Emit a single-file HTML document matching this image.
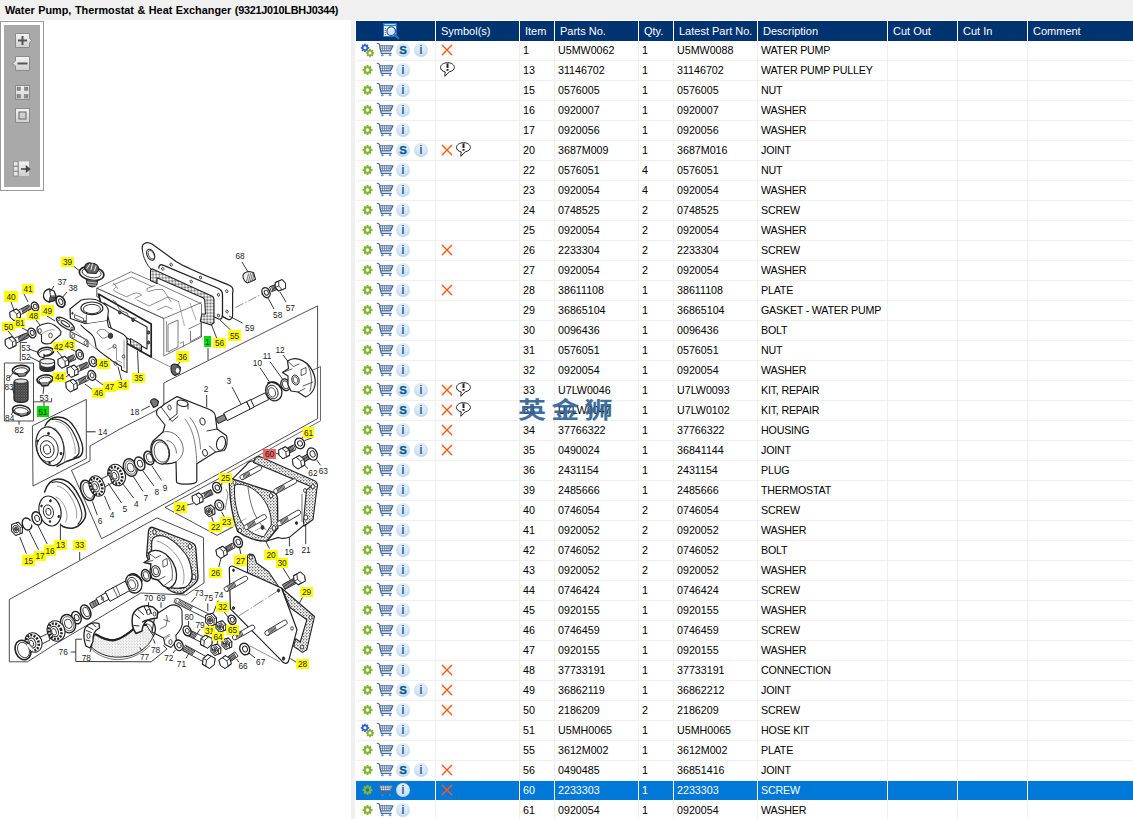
<!DOCTYPE html>
<html lang="en"><head><meta charset="utf-8"><title>Water Pump, Thermostat &amp; Heat Exchanger</title>
<style>
*{margin:0;padding:0;box-sizing:border-box}
html,body{width:1133px;height:819px;overflow:hidden;background:#f0f0f0}
body{position:relative;font-family:"Liberation Sans","Noto Sans CJK SC",sans-serif;font-size:10.7px;color:#000}
#title{position:absolute;left:5px;top:2px;height:16px;line-height:16px;font-weight:bold;font-size:10.85px;white-space:nowrap;color:#000;word-spacing:.5px}
#title span{letter-spacing:-.25px}
#left{position:absolute;left:0;top:20px;width:351px;height:799px;background:#fff;overflow:hidden}
#tb{position:absolute;left:0;top:1px;width:44px;height:170px;border:1px solid #9a9a9a;background:#fff}
#tb .in{position:absolute;left:3px;top:3px;width:36px;height:162px;background:#a9a9a9}
#grid{position:absolute;left:0;top:0;width:1133px;height:819px;pointer-events:none}
#grid:after{content:"";position:absolute;left:355px;top:20px;width:1px;height:799px;background:#fff}
#grid:before{content:"";position:absolute;left:355px;top:20px;width:778px;height:799px;background:#fff}
.hd{position:absolute;top:21px;height:20px;background:#003471;color:#fff;line-height:20px;white-space:nowrap;overflow:hidden;font-size:11px}
.hd span{position:absolute;left:5px;top:0}
.row{position:absolute;left:355px;width:778px;height:20px;border-bottom:1px solid #f0f0f0;line-height:19px;white-space:nowrap}
.row.sel{background:#0078d7;color:#fff;border-bottom-color:#fff}
.row .t{position:absolute;top:0}
.row .d{letter-spacing:-0.2px}
.ic{position:absolute;overflow:visible}
.vs{position:absolute;top:41px;width:1px;height:778px;background:#f0f0f0}
.vw{position:absolute;width:1px;height:19px;background:#fff}
.cb{position:absolute;top:2px;width:14px;height:14px;margin-left:1px;border-radius:50%;background:radial-gradient(circle at 50% 35%,#eef6fc 0%,#cfe3f3 55%,#a9cbe6 100%);text-align:center}
.cb b{position:absolute;left:0;width:14px;text-align:center;font-weight:bold;line-height:14px}
.cb .s{top:0;color:#0a5a96;font-size:11.5px;-webkit-text-stroke:0.3px #0a5a96}
.cb .i{top:0;color:#3a68a8;font-size:12px}
#wm{position:absolute;left:518px;top:393px;font-size:26px;line-height:30px;font-weight:bold;color:#2c5f93;opacity:.9;letter-spacing:4.8px;white-space:nowrap;font-family:"Noto Sans CJK SC","Liberation Sans",sans-serif;transform:scale(1.08,.88);transform-origin:0 50%}

</style></head>
<body>
<svg width="0" height="0" style="position:absolute">
<defs>
<g id="gearshape"><circle r="3" fill="none" stroke-width="2.2"/><g stroke-width="2.1"><path d="M0-5.2V-3.5M0 3.5V5.2M-5.2 0H-3.5M3.5 0H5.2M-3.7-3.7L-2.500-2.5M2.500 2.5L3.7 3.7M-3.7 3.7L-2.500 2.5M2.500-2.5L3.7-3.700"/></g></g>
<g id="i-gear"><g transform="translate(7.5,8) scale(.94)" stroke="#82b432"><use href="#gearshape"/></g></g>
<g id="i-gear2"><g transform="translate(5,5.8) scale(.8)" stroke="#2f62d8"><use href="#gearshape"/></g><g transform="translate(10,11) scale(.8)" stroke="#82b432"><use href="#gearshape"/></g></g>
<g id="i-cart" fill="none" stroke="#48699a" stroke-width="1.15" stroke-linecap="round" stroke-linejoin="round"><path d="M1.2 1.3L3 1.8L4 4.300L5.200 11.400H15.200"/><path d="M3.600 3.700H17L14.400 8.800H4.600Z" fill="#f2f6fb"/><path d="M6.400 4.300V8.300M8.600 4.300V8.300M10.800 4.300V8.300M13 4.300V8.300M15 4.300V7.300M4.300 6.200H15.800" stroke-width=".7"/><circle cx="6.300" cy="13.200" r=".8" fill="#3a8fe0" stroke="#3a8fe0" stroke-width=".6"/><circle cx="14" cy="13.200" r=".8" fill="#3a8fe0" stroke="#3a8fe0" stroke-width=".6"/></g>
<g id="i-x" stroke="#ff5a14" stroke-width="1.4" stroke-linecap="round"><path d="M3.3 4.3L12.7 13.7M12.7 4.3L3.3 13.7"/></g>
<g id="i-bub" fill="none" stroke="#222" stroke-width="1"><path d="M8.5 1.7C12.4 1.7 15.4 3.8 15.4 6.5C15.4 8.6 13.2 10.2 10.3 10.9L5.8 15.3L6.2 10.9C3.4 10.3 1.5 8.6 1.5 6.5C1.5 3.8 4.6 1.7 8.5 1.7Z" fill="#fff"/><path d="M8.5 2.4V7" stroke-width="2"/><path d="M8.5 8V9.800" stroke-width="2"/></g>
<g id="i-find"><rect x="0.5" y="1.5" width="13" height="13" fill="#fff" stroke="#1c74c8" stroke-width="1"/><rect x="0" y="1" width="14" height="3.200" fill="#1c78d2"/><path d="M1.5 2.6H12.5" stroke="#fff" stroke-width=".8"/><path d="M2.300 6V13.500" stroke="#2a6ab8" stroke-width="1.2" stroke-dasharray="1 1"/><circle cx="8.2" cy="9.3" r="4.300" fill="#dfe3e8" stroke="#1c66b6" stroke-width="1.3"/><path d="M6 7.500C7 6.300 9 6 10.300 7" stroke="#fff" stroke-width="1.200" fill="none"/><path d="M11.300 12.500L15.300 16.300" stroke="#2a6cba" stroke-width="2.200" stroke-linecap="round"/></g>
</defs>
</svg>

<div id="title">Water Pump, Thermostat &amp; Heat Exchanger <span>(9321J010LBHJ0344)</span></div>
<div id="left">
<div id="tb"><div class="in"></div>
<svg style="position:absolute;left:-1px;top:-1px" width="44" height="170" viewBox="0 21 44 170">
<defs><linearGradient id="bg1" x1="0" y1="0" x2="0" y2="1"><stop offset="0" stop-color="#f4f4f4"/><stop offset="1" stop-color="#cfcfcf"/></linearGradient></defs>
<g stroke="#8a8a8a" stroke-width="1" fill="url(#bg1)">
<path d="M15.5 33.500H29.500V38L31.500 40.500L29.500 43V47.500H15.500Z"/>
<path d="M15.500 56.500H29.500V70.500H15.500V66L12.500 63.500L15.500 61Z"/>
<rect x="15.500" y="85.500" width="14" height="14"/>
<rect x="15.500" y="108.500" width="14" height="14"/>
</g>
<path d="M22.500 36V45M18 40.500H27" stroke="#555" stroke-width="2" fill="none"/>
<path d="M17.500 63.500H27.500" stroke="#555" stroke-width="2" fill="none"/>
<g fill="#8a8a8a" stroke="#777" stroke-width=".5"><rect x="17" y="87" width="3.500" height="3.500"/><rect x="24.500" y="87" width="3.500" height="3.500"/><rect x="17" y="94.500" width="3.500" height="3.500"/><rect x="24.500" y="94.500" width="3.500" height="3.500"/></g>
<rect x="19" y="112" width="7" height="7" fill="#d0d0d0" stroke="#666" stroke-width="1"/>
<g fill="#e6e6e6" stroke="#8a8a8a" stroke-width=".8"><rect x="13.500" y="161.500" width="4.500" height="4.500"/><rect x="13.500" y="166.500" width="4.500" height="4.500"/><rect x="13.500" y="171.500" width="4.500" height="4.500"/></g>
<rect x="19" y="161.500" width="10" height="14.500" fill="url(#bg1)"/>
<path d="M21 169H28M26.500 166.500L29.500 169L26.500 171.500Z" stroke="#444" stroke-width="1.400" fill="#444"/>
</svg></div>

</div>
<svg id="dg" width="351" height="819" viewBox="0 0 351 819" style="position:absolute;left:0;top:0">
<defs><pattern id="dots" width="3" height="3" patternUnits="userSpaceOnUse"><rect width="3" height="3" fill="#fff"/><circle cx="0.8" cy="0.8" r="0.68" fill="#2a2a2a"/><circle cx="2.3" cy="2.2" r="0.55" fill="#444"/></pattern>
<pattern id="dk" width="3.2" height="3.2" patternUnits="userSpaceOnUse"><rect width="3.2" height="3.2" fill="#b4b4b4"/><circle cx="1" cy="1" r="0.95" fill="#fff"/><circle cx="2.5" cy="2.5" r="0.5" fill="#333"/></pattern>
<pattern id="rub" width="2.6" height="2.6" patternUnits="userSpaceOnUse"><rect width="2.6" height="2.6" fill="#3a3a3a"/><circle cx="0.8" cy="0.8" r="0.6" fill="#bbb"/><circle cx="2" cy="2.1" r="0.4" fill="#888"/></pattern>
<pattern id="hose" width="2.8" height="2.8" patternUnits="userSpaceOnUse"><rect width="2.8" height="2.8" fill="#fff"/><circle cx="0.7" cy="0.7" r="0.45" fill="#444"/><circle cx="2.1" cy="2" r="0.4" fill="#555"/></pattern></defs>
<style>.n{font-family:"Liberation Sans",sans-serif;text-anchor:middle;fill:#222}</style>
<path d="M208 348 L208 360" stroke="#222" stroke-width="0.9" fill="none"/>
<path d="M163.8 405 L163.8 383 L230 349.6 L299 315 L317.6 305.9 L317.6 418.6 L220 473 L110 534.3 L101.6 538.7 L73.6 475 L71.4 470.3 L90 461 L90 446 L120 429 L162.7 407" stroke="#222" stroke-width="0.8" fill="none"/>
<path d="M312.9 370 L320.5 366.6 L320.5 420.8 L222 476" stroke="#444" stroke-width="0.8" fill="none"/>
<path d="M32.4 425.8 L86.3 399.4 L86.3 458.5 L33 486Z" stroke="#222" stroke-width="0.8" fill="none" stroke-linejoin="round"/>
<path d="M86.3 431.8 L95.6 431.8" stroke="#222" stroke-width="1" fill="none"/>
<path d="M4.4 363 L33.5 363 L33.5 421 L4.4 421Z" stroke="#222" stroke-width="0.8" fill="none" stroke-linejoin="round"/>
<path d="M19 421 L19 424.7" stroke="#222" stroke-width="0.9" fill="none"/>
<path d="M27 342.5 L20.3 342.5 L20.3 361" stroke="#222" stroke-width="0.8" fill="none"/>
<path d="M33 401.8 L51.6 401.8 L51.6 398" stroke="#222" stroke-width="0.8" fill="none"/>
<path d="M44 402 L44 406" stroke="#222" stroke-width="0.9" fill="none"/>
<path d="M79.7 552 L79.7 560" stroke="#222" stroke-width="0.9" fill="none"/>
<path d="M9.3 599.5 L90 555 L110 543.7 L157 517.9 L203.4 537.6 L204 583 L185.8 595 L140.8 593 L53.8 645 L27.5 661.8 L9.3 661.8Z" stroke="#222" stroke-width="0.8" fill="none" stroke-linejoin="round"/>
<path d="M220 478 L165 507.4 L217 535.4 L233 527" stroke="#222" stroke-width="0.8" fill="none"/>
<path d="M81.9 639.2 L75.8 639.2 L75.8 661.5 L151.2 661.8 L167 649 L163.3 645.3" stroke="#222" stroke-width="0.9" fill="none"/>
<path d="M70.9 652 L75.8 652" stroke="#222" stroke-width="0.9" fill="none"/>
<path d="M142.4 250 C141 243 147 241 152 244 L176 261.4 C190 270 215 279 229.8 285.5 C233 287 233.5 290 232.6 293 L232.6 316 C232.6 319.5 229 320.5 226 318.5 L222 316" stroke="#222" stroke-width="1.2" fill="none" stroke-linejoin="round" stroke-linecap="round"/>
<path d="M142.4 250 C143 258 147 265 151 269" stroke="#222" stroke-width="1.0" fill="none" stroke-linejoin="round" stroke-linecap="round"/>
<ellipse cx="150.7" cy="254.8" rx="3.6" ry="5.8" stroke="#222" stroke-width="1.1" fill="none" transform="rotate(-25 150.7 254.8)"/>
<ellipse cx="151.3" cy="254.8" rx="2.6" ry="4.6" stroke="#222" stroke-width="0.7" fill="none" transform="rotate(-25 151.3 254.8)"/>
<ellipse cx="171.2" cy="264.6" rx="1.1" ry="1.5" stroke="#222" stroke-width="0.8" fill="none" transform="rotate(-20 171.2 264.6)"/>
<ellipse cx="200.5" cy="277.5" rx="1.1" ry="1.5" stroke="#222" stroke-width="0.8" fill="none" transform="rotate(-20 200.5 277.5)"/>
<ellipse cx="226.8" cy="291.2" rx="1.1" ry="1.5" stroke="#222" stroke-width="0.8" fill="none" transform="rotate(-20 226.8 291.2)"/>
<ellipse cx="227" cy="311.5" rx="1.1" ry="1.5" stroke="#222" stroke-width="0.8" fill="none" transform="rotate(-20 227 311.5)"/>
<path d="M159 268 C158.500 265.5 160.500 264 163 265.2 L218.5 288.500 C221.500 290 222.500 292 222.500 295 L222.500 315.500 C222.500 319 220 320 217.500 318.500 L214.5 317" stroke="#222" stroke-width="1.3" fill="none" stroke-linejoin="round" stroke-linecap="round"/>
<ellipse cx="162.8" cy="268.8" rx="1.1" ry="1.5" stroke="#222" stroke-width="0.8" fill="none" transform="rotate(-20 162.8 268.8)"/>
<ellipse cx="191.2" cy="281.5" rx="1.1" ry="1.5" stroke="#222" stroke-width="0.8" fill="none" transform="rotate(-20 191.2 281.5)"/>
<ellipse cx="218.5" cy="294.8" rx="1.1" ry="1.5" stroke="#222" stroke-width="0.8" fill="none" transform="rotate(-20 218.5 294.8)"/>
<ellipse cx="218.5" cy="315.5" rx="1.1" ry="1.5" stroke="#222" stroke-width="0.8" fill="none" transform="rotate(-20 218.5 315.5)"/>
<path d="M96.8 288.2 L131 271.8 L151 280.5 L157.5 283.5 L198.5 302.5 L201.5 304 L201.5 337 L163.8 356 L163.8 318.5Z" stroke="#555" stroke-width="0.8" fill="#fff" stroke-linejoin="round"/>
<path d="M96.8 288.2 L163.8 318.5 L201.5 302.5" stroke="#555" stroke-width="0.8" fill="none"/>
<path d="M96.8 288.2 L96.8 296.5 L151.2 326" stroke="#222" stroke-width="0.8" fill="none"/>
<path d="M113 285 L131.5 277 L152 286.5 M115.500 287.5 C113 289 113.500 291 116 292 L126.5 296.8 L133.5 293.500 C136 292.500 140 293 141.500 295 L135 298.5 M147 288.500 L154.5 285.5 M147.500 289 C146 290 147 291.500 149 291.500 L155.500 289.5 L163 289.500 L171 301.5 M113.500 283 L117.5 288.5" stroke="#444" stroke-width="0.6" fill="none" stroke-linejoin="round" stroke-linecap="round"/>
<path d="M137 300 L149 306 L168 297 L178.500 301.5 M157.500 310 L166 306 L172 309" stroke="#444" stroke-width="0.6" fill="none" stroke-linejoin="round" stroke-linecap="round"/>
<path d="M166.5 321 L166.5 352" stroke="#555" stroke-width="0.6" fill="none"/>
<path d="M168 324.5 L178 320 L178 347 L168 352Z" stroke="#444" stroke-width="0.7" fill="none" stroke-linejoin="round"/>
<path d="M188.5 329 L201 323 L201 336 L190.5 341.5 L190.5 331" stroke="#444" stroke-width="0.7" fill="none" stroke-linejoin="round"/>
<path d="M180 343.5 L183.5 341.5 L183.5 347" stroke="#555" stroke-width="0.6" fill="none"/>
<path d="M178.5 301.5 L184.5 326" stroke="#555" stroke-width="0.5" fill="none"/>
<path d="M190 303 L196 320" stroke="#555" stroke-width="0.5" fill="none"/>
<path d="M150.5 270 L152 268.8 L212.8 296.5 L214 299 L214 322.5 L211 325 L200.3 321.4 L201.8 314 L205.5 314 L204.7 300 L203.5 298 L157 277.8 L157 283.5 L150.5 280.5Z" stroke="#222" stroke-width="1.1" fill="url(#dk)" stroke-linejoin="round"/>
<path d="M98.5 294 L151.2 324 L151.2 357 L108 333Z" stroke="#222" stroke-width="1.7" fill="#fff" stroke-linejoin="round"/>
<path d="M104 303 L147 327 L147 349 L111.5 329.5Z" stroke="#222" stroke-width="1.1" fill="#fff" stroke-linejoin="round"/>
<ellipse cx="119.8" cy="312.5" rx="1.2" ry="1.6" stroke="#222" stroke-width="0.9" fill="#555"/>
<ellipse cx="133" cy="320" rx="1.2" ry="1.6" stroke="#222" stroke-width="0.9" fill="#555"/>
<ellipse cx="148.5" cy="332.5" rx="1.2" ry="1.6" stroke="#222" stroke-width="0.9" fill="#555"/>
<ellipse cx="148.5" cy="342.5" rx="1.2" ry="1.6" stroke="#222" stroke-width="0.9" fill="#555"/>
<ellipse cx="140.5" cy="350" rx="1.2" ry="1.6" stroke="#222" stroke-width="0.9" fill="#555"/>
<ellipse cx="126" cy="341.5" rx="1.2" ry="1.6" stroke="#222" stroke-width="0.9" fill="#555"/>
<path d="M113 300 C118 302 117 309 122 311 L127 313 C128 317 132 319 136 318" stroke="#333" stroke-width="0.8" fill="none" stroke-linejoin="round" stroke-linecap="round"/>
<path d="M130.5 338.5 L141.5 345 L141.5 351 L130.5 344.5Z" stroke="#222" stroke-width="1" fill="url(#dk)" stroke-linejoin="round"/>
<path d="M69.900 309 L80.9 300.300 C84 299 95 298 98.500 300.9 C104 303 108 306 108.400 310.8 L107.3 320.7 L86.4 324 L70.4 318.500Z" stroke="#222" stroke-width="1.1" fill="#fff" stroke-linejoin="round" stroke-linecap="round"/>
<ellipse cx="91.9" cy="308.3" rx="11" ry="6.3" stroke="#222" stroke-width="1.1" fill="#fff"/>
<ellipse cx="91.9" cy="309" rx="8.6" ry="4.6" stroke="#222" stroke-width="0.9" fill="#fff"/>
<path d="M86.400 324 L86.4 315.5 M70.400 318.500 L70.400 309.5" stroke="#222" stroke-width="0.7" fill="none" stroke-linejoin="round" stroke-linecap="round"/>
<path d="M74.5 314.5 L83.5 318.5 L83.5 322 L74.5 318Z" stroke="#333" stroke-width="0.8" fill="none" stroke-linejoin="round"/>
<ellipse cx="72.5" cy="313.3" rx="0.7" ry="0.9" stroke="#222" stroke-width="0.8" fill="#333"/>
<ellipse cx="85" cy="321.5" rx="0.7" ry="0.9" stroke="#222" stroke-width="0.8" fill="#333"/>
<path d="M80.900 325 C86 331 90 332 93 336 C96 340 95 345 96.300 348 C100 353 108 357 112.700 361.3 L121.500 366.5 L121.5 370 L127 372.5 L127 340 C127 336 124 334.5 121 333 L108.500 327 L107.3 320.7" stroke="#222" stroke-width="1.1" fill="#fff" stroke-linejoin="round" stroke-linecap="round"/>
<path d="M97 332 C99 329 103 328.500 106 330.500 L110 334.500 C108 337 104 339 102 338 Z" stroke="#444" stroke-width="0.7" fill="none" stroke-linejoin="round" stroke-linecap="round"/>
<ellipse cx="110.5" cy="335.8" rx="2.2" ry="2.6" stroke="#222" stroke-width="0.9" fill="#444"/>
<path d="M108 349.500 L113.500 346.5 L116.500 348 L116.500 360 L121.500 362.5 M124 340 L124 368" stroke="#555" stroke-width="0.6" fill="none" stroke-linejoin="round" stroke-linecap="round"/>
<ellipse cx="114.5" cy="346.3" rx="1.5" ry="1.9" stroke="#222" stroke-width="0.7" fill="none"/>
<ellipse cx="115.5" cy="363.5" rx="1.5" ry="1.9" stroke="#222" stroke-width="0.7" fill="none"/>
<ellipse cx="123.5" cy="356.5" rx="1.3" ry="1.7" stroke="#222" stroke-width="0.7" fill="none"/>
<path d="M70.5 331.5 L88 340.5 L88 347 L70.500 337.5Z" stroke="#222" stroke-width="0.9" fill="#fff" stroke-linejoin="round" stroke-linecap="round"/>
<ellipse cx="73.2" cy="336" rx="1.5" ry="2" stroke="#222" stroke-width="0.7" fill="none"/>
<ellipse cx="85.5" cy="342.8" rx="1.5" ry="2" stroke="#222" stroke-width="0.7" fill="none"/>
<path d="M69 325.5 L96 349" stroke="#555" stroke-width="0.5" fill="none"/>
<ellipse cx="91.6" cy="273.4" rx="12.4" ry="6.8" stroke="#222" stroke-width="1.6" fill="#fff" transform="rotate(10 91.6 273.4)"/>
<ellipse cx="91.6" cy="272.8" rx="9.6" ry="4.8" stroke="#222" stroke-width="0.8" fill="none" transform="rotate(10 91.6 272.8)"/>
<path d="M84.700 269 C84 264 88 262.500 91 263 C95 263 99 265 98.600 270 L96 273.500 L88 273Z" stroke="#222" stroke-width="1.2" fill="#666" stroke-linejoin="round" stroke-linecap="round"/>
<path d="M87 268.500 L89.500 264.500 M91 269.500 L92.500 264 M94.500 270.500 L96 266" stroke="#eee" stroke-width="1.0" fill="none" stroke-linejoin="round" stroke-linecap="round"/>
<path d="M86.500 279.500 C86.500 284.500 88 286.500 92 287 C96 287 97.500 284.500 97.500 280.500" stroke="#222" stroke-width="1.1" fill="#555" stroke-linejoin="round" stroke-linecap="round"/>
<path d="M87 282 L97 283" stroke="#ddd" stroke-width="0.8" fill="none"/>
<path d="M87.5 284.5 L96.5 285.3" stroke="#ddd" stroke-width="0.8" fill="none"/>
<path d="M43.500 296.500 C43 292 46 289.500 49.500 289 L54 291 L56 296 L54.500 300.500 L49 302 C45.500 301 44 299 43.500 296.500Z" stroke="#222" stroke-width="1.3" fill="#fff" stroke-linejoin="round" stroke-linecap="round"/>
<path d="M49 302 L50.500 296 L49.500 289 M50.500 296 L56 296" stroke="#222" stroke-width="0.9" fill="none" stroke-linejoin="round" stroke-linecap="round"/>
<path d="M50.500 297 L55 297 L54 300.5 L50 301.5Z" stroke="#222" stroke-width="0.6" fill="#555" stroke-linejoin="round" stroke-linecap="round"/>
<ellipse cx="60.5" cy="301.6" rx="4.2" ry="5.8" stroke="#222" stroke-width="1.7" fill="#fff" transform="rotate(-25 60.5 301.6)"/>
<ellipse cx="60.8" cy="301.6" rx="1.9" ry="3" stroke="#222" stroke-width="0.9" fill="none" transform="rotate(-25 60.8 301.6)"/>
<path d="M16.6 316.7 L31.1 309.2 L28.9 304.8 L14.4 312.3Z" stroke="#222" stroke-width="0.9" fill="#fff" stroke-linejoin="round"/>
<path d="M23.2 313.3 L21.5 308.6" stroke="#1a1a1a" stroke-width="0.85" fill="none"/>
<path d="M24.2 312.8 L22.6 308" stroke="#1a1a1a" stroke-width="0.85" fill="none"/>
<path d="M25.3 312.2 L23.6 307.5" stroke="#1a1a1a" stroke-width="0.85" fill="none"/>
<path d="M26.4 311.7 L24.7 306.9" stroke="#1a1a1a" stroke-width="0.85" fill="none"/>
<path d="M27.4 311.1 L25.8 306.4" stroke="#1a1a1a" stroke-width="0.85" fill="none"/>
<path d="M28.5 310.6 L26.8 305.8" stroke="#1a1a1a" stroke-width="0.85" fill="none"/>
<path d="M29.6 310 L27.9 305.3" stroke="#1a1a1a" stroke-width="0.85" fill="none"/>
<path d="M9.8 312.3 L13 310.6 L16.3 308.9 L20.1 312.1 L20.6 317.1 L14 320.5 L10.3 317.2Z" stroke="#222" stroke-width="1.1" fill="#fff" stroke-linejoin="round"/>
<path d="M16.7 313.9 L17.2 318.8 L14 320.5 L10.3 317.2 L9.8 312.3 L13 310.6Z" stroke="#222" stroke-width="0.9" fill="#fff" stroke-linejoin="round"/>
<path d="M16.7 313.9 L20.1 312.1" stroke="#222" stroke-width="0.8" fill="none"/>
<path d="M17.2 318.8 L20.6 317.1" stroke="#222" stroke-width="0.8" fill="none"/>
<path d="M13 310.6 L16.3 308.9" stroke="#222" stroke-width="0.8" fill="none"/>
<ellipse cx="35" cy="306.5" rx="3.5" ry="4.6" stroke="#222" stroke-width="1.4" fill="#fff" transform="rotate(-25 35 306.5)"/>
<ellipse cx="35.3" cy="306.5" rx="1.8" ry="2.3" stroke="#222" stroke-width="0.9" fill="none" transform="rotate(-25 35.3 306.5)"/>
<ellipse cx="65.4" cy="323.8" rx="10.5" ry="3.9" stroke="#222" stroke-width="1.2" fill="#fff" transform="rotate(33 65.4 323.8)"/>
<ellipse cx="65.4" cy="323.8" rx="5" ry="1.7" stroke="#222" stroke-width="1.0" fill="none" transform="rotate(33 65.4 323.8)"/>
<ellipse cx="58.8" cy="319.5" rx="1.1" ry="1.3" stroke="#222" stroke-width="0.8" fill="none"/>
<ellipse cx="72" cy="328.3" rx="1.1" ry="1.3" stroke="#222" stroke-width="0.8" fill="none"/>
<path d="M37 330 C36.500 327 39 325.500 42 324.500 L48 323 C52 323 58 327 61 331.5 L60.5 334.800 L53.500 340.500 L50.5 343.5 C46 344.500 42 343.500 41.500 341.500 L41.500 334.500 C39 334 37.500 332.5 37 330Z" stroke="#222" stroke-width="1.1" fill="#fff" stroke-linejoin="round" stroke-linecap="round"/>
<ellipse cx="39.8" cy="330.8" rx="1.6" ry="2.2" stroke="#222" stroke-width="0.8" fill="none"/>
<ellipse cx="50.5" cy="335.5" rx="1.8" ry="2.3" stroke="#222" stroke-width="0.8" fill="none"/>
<path d="M42 334 C46 331 50 329 54 330" stroke="#555" stroke-width="0.6" fill="none" stroke-linejoin="round" stroke-linecap="round"/>
<path d="M12 344.9 L28.5 337.7 L26.5 332.9 L10 340.1Z" stroke="#222" stroke-width="0.9" fill="#fff" stroke-linejoin="round"/>
<path d="M19.5 341.6 L18 336.6" stroke="#1a1a1a" stroke-width="0.85" fill="none"/>
<path d="M20.6 341.2 L19.1 336.1" stroke="#1a1a1a" stroke-width="0.85" fill="none"/>
<path d="M21.7 340.7 L20.2 335.6" stroke="#1a1a1a" stroke-width="0.85" fill="none"/>
<path d="M22.8 340.2 L21.3 335.2" stroke="#1a1a1a" stroke-width="0.85" fill="none"/>
<path d="M23.9 339.7 L22.4 334.7" stroke="#1a1a1a" stroke-width="0.85" fill="none"/>
<path d="M25 339.2 L23.5 334.2" stroke="#1a1a1a" stroke-width="0.85" fill="none"/>
<path d="M26.1 338.8 L24.6 333.7" stroke="#1a1a1a" stroke-width="0.85" fill="none"/>
<path d="M27.2 338.3 L25.7 333.2" stroke="#1a1a1a" stroke-width="0.85" fill="none"/>
<path d="M5.2 339.7 L8.6 338.1 L12.2 336.6 L15.9 340.3 L16.1 345.6 L12.7 347.2 L9.1 348.7 L5.4 345Z" stroke="#222" stroke-width="1.1" fill="#fff" stroke-linejoin="round"/>
<path d="M12.5 341.9 L12.7 347.2 L9.1 348.7 L5.4 345 L5.2 339.7 L8.7 338.1Z" stroke="#222" stroke-width="0.9" fill="#fff" stroke-linejoin="round"/>
<path d="M12.5 341.9 L15.9 340.3" stroke="#222" stroke-width="0.8" fill="none"/>
<path d="M12.7 347.2 L16.1 345.6" stroke="#222" stroke-width="0.8" fill="none"/>
<path d="M8.7 338.1 L12.2 336.6" stroke="#222" stroke-width="0.8" fill="none"/>
<ellipse cx="31.9" cy="333" rx="3.8" ry="5" stroke="#222" stroke-width="1.4" fill="#fff" transform="rotate(-25 31.9 333)"/>
<ellipse cx="32.2" cy="333" rx="1.9" ry="2.5" stroke="#222" stroke-width="0.9" fill="none" transform="rotate(-25 32.2 333)"/>
<ellipse cx="45.6" cy="351.8" rx="8" ry="4.3" stroke="#222" stroke-width="1.6" fill="#fff" transform="rotate(-8 45.6 351.8)"/>
<ellipse cx="45.6" cy="352.5" rx="6.2" ry="2.8" stroke="#222" stroke-width="0.9" fill="none" transform="rotate(-8 45.6 352.5)"/>
<path d="M38 353 L39.500 356.500 L44 358 L44 354" stroke="#222" stroke-width="1.1" fill="#fff" stroke-linejoin="round" stroke-linecap="round"/>
<path d="M40 361.500 C40 358 54.500 358 54.500 361.500 L54.500 368 C54.500 372.500 40 372.500 40 368Z" stroke="#222" stroke-width="1.3" fill="#fff" stroke-linejoin="round" stroke-linecap="round"/>
<path d="M40.500 365 C44 368 51 368 54 365 L54.200 368 C54 372 40.500 372 40.500 368Z" stroke="#222" stroke-width="0.5" fill="#333" stroke-linejoin="round" stroke-linecap="round"/>
<ellipse cx="47.2" cy="361.3" rx="7.2" ry="2.6" stroke="#222" stroke-width="0.9" fill="#eee"/>
<ellipse cx="45" cy="379.5" rx="8" ry="4.5" stroke="#222" stroke-width="1.6" fill="#fff" transform="rotate(-8 45 379.5)"/>
<ellipse cx="45" cy="380.2" rx="6.2" ry="3" stroke="#222" stroke-width="0.9" fill="none" transform="rotate(-8 45 380.2)"/>
<path d="M39.500 382 L42 386 L48 385.500 L50 382" stroke="#222" stroke-width="1.3" fill="#888" stroke-linejoin="round" stroke-linecap="round"/>
<ellipse cx="20.9" cy="370" rx="8.6" ry="4.6" stroke="#222" stroke-width="1.6" fill="#fff" transform="rotate(-5 20.9 370)"/>
<ellipse cx="20.9" cy="370.8" rx="6.6" ry="3" stroke="#222" stroke-width="0.9" fill="none" transform="rotate(-5 20.9 370.8)"/>
<path d="M17 373.500 L19 376.500 L25 376 L27 373" stroke="#222" stroke-width="1.2" fill="#888" stroke-linejoin="round" stroke-linecap="round"/>
<path d="M14 382.500 C14 378.500 28 378.500 28 382.500 L28 399 C28 403.500 14 403.500 14 399Z" stroke="#222" stroke-width="1.3" fill="url(#rub)" stroke-linejoin="round" stroke-linecap="round"/>
<ellipse cx="21" cy="381.2" rx="6.6" ry="2.2" stroke="#222" stroke-width="0.8" fill="#ddd"/>
<ellipse cx="21.4" cy="410.4" rx="9" ry="5" stroke="#222" stroke-width="1.6" fill="#fff" transform="rotate(8 21.4 410.4)"/>
<ellipse cx="21.4" cy="411" rx="7" ry="3.3" stroke="#222" stroke-width="0.9" fill="none" transform="rotate(8 21.4 411)"/>
<path d="M18 414 L21 416.500 L27 415 L28 412" stroke="#222" stroke-width="1.2" fill="#888" stroke-linejoin="round" stroke-linecap="round"/>
<path d="M64.8 364.4 L75.8 359.4 L73.6 354.6 L62.6 359.6Z" stroke="#222" stroke-width="0.9" fill="#fff" stroke-linejoin="round"/>
<path d="M69.7 362.1 L68.2 357.1" stroke="#1a1a1a" stroke-width="0.85" fill="none"/>
<path d="M70.8 361.6 L69.3 356.6" stroke="#1a1a1a" stroke-width="0.85" fill="none"/>
<path d="M71.9 361.1 L70.4 356.1" stroke="#1a1a1a" stroke-width="0.85" fill="none"/>
<path d="M73 360.6 L71.5 355.6" stroke="#1a1a1a" stroke-width="0.85" fill="none"/>
<path d="M74.1 360.1 L72.6 355.1" stroke="#1a1a1a" stroke-width="0.85" fill="none"/>
<path d="M58 359.4 L61.4 357.8 L64.8 356.3 L68.5 359.8 L68.8 364.9 L65.4 366.5 L61.9 368.1 L58.2 364.5Z" stroke="#222" stroke-width="1.1" fill="#fff" stroke-linejoin="round"/>
<path d="M65 361.4 L65.3 366.5 L61.9 368.1 L58.2 364.5 L58 359.4 L61.4 357.8Z" stroke="#222" stroke-width="0.9" fill="#fff" stroke-linejoin="round"/>
<path d="M65 361.4 L68.5 359.8" stroke="#222" stroke-width="0.8" fill="none"/>
<path d="M65.3 366.5 L68.8 364.9" stroke="#222" stroke-width="0.8" fill="none"/>
<path d="M61.4 357.8 L64.8 356.3" stroke="#222" stroke-width="0.8" fill="none"/>
<ellipse cx="79.7" cy="354.6" rx="3.5" ry="5" stroke="#222" stroke-width="1.4" fill="#fff" transform="rotate(-20 79.7 354.6)"/>
<ellipse cx="80" cy="354.6" rx="1.8" ry="2.5" stroke="#222" stroke-width="0.9" fill="none" transform="rotate(-20 80 354.6)"/>
<path d="M74 373.4 L89 366.9 L87 362.1 L72 368.6Z" stroke="#222" stroke-width="0.9" fill="#fff" stroke-linejoin="round"/>
<path d="M80.8 370.5 L79.4 365.4" stroke="#1a1a1a" stroke-width="0.85" fill="none"/>
<path d="M81.9 370 L80.5 364.9" stroke="#1a1a1a" stroke-width="0.85" fill="none"/>
<path d="M83 369.5 L81.6 364.5" stroke="#1a1a1a" stroke-width="0.85" fill="none"/>
<path d="M84.1 369 L82.7 364" stroke="#1a1a1a" stroke-width="0.85" fill="none"/>
<path d="M85.2 368.6 L83.8 363.5" stroke="#1a1a1a" stroke-width="0.85" fill="none"/>
<path d="M86.3 368.1 L84.9 363" stroke="#1a1a1a" stroke-width="0.85" fill="none"/>
<path d="M87.4 367.6 L86 362.5" stroke="#1a1a1a" stroke-width="0.85" fill="none"/>
<path d="M67.2 368.1 L74.2 365.1 L78 368.9 L78.1 374.2 L71.1 377.2 L67.4 373.4Z" stroke="#222" stroke-width="1.1" fill="#fff" stroke-linejoin="round"/>
<path d="M74.5 370.4 L74.6 375.7 L71.1 377.2 L67.4 373.4 L67.2 368.1 L70.7 366.6Z" stroke="#222" stroke-width="0.9" fill="#fff" stroke-linejoin="round"/>
<path d="M74.5 370.4 L78 368.9" stroke="#222" stroke-width="0.8" fill="none"/>
<path d="M74.6 375.7 L78.1 374.2" stroke="#222" stroke-width="0.8" fill="none"/>
<path d="M70.7 366.6 L74.2 365.1" stroke="#222" stroke-width="0.8" fill="none"/>
<ellipse cx="92.9" cy="361.7" rx="3.8" ry="5" stroke="#222" stroke-width="1.4" fill="#fff" transform="rotate(-20 92.9 361.7)"/>
<ellipse cx="93.2" cy="361.7" rx="1.9" ry="2.5" stroke="#222" stroke-width="0.9" fill="none" transform="rotate(-20 93.2 361.7)"/>
<path d="M73.1 387.6 L88.5 380.3 L86.3 375.7 L70.9 383Z" stroke="#222" stroke-width="0.9" fill="#fff" stroke-linejoin="round"/>
<path d="M80 384.4 L78.4 379.4" stroke="#1a1a1a" stroke-width="0.85" fill="none"/>
<path d="M81.1 383.9 L79.5 378.9" stroke="#1a1a1a" stroke-width="0.85" fill="none"/>
<path d="M82.2 383.3 L80.6 378.3" stroke="#1a1a1a" stroke-width="0.85" fill="none"/>
<path d="M83.3 382.8 L81.7 377.8" stroke="#1a1a1a" stroke-width="0.85" fill="none"/>
<path d="M84.4 382.3 L82.8 377.3" stroke="#1a1a1a" stroke-width="0.85" fill="none"/>
<path d="M85.5 381.8 L83.9 376.8" stroke="#1a1a1a" stroke-width="0.85" fill="none"/>
<path d="M86.5 381.3 L85 376.3" stroke="#1a1a1a" stroke-width="0.85" fill="none"/>
<path d="M65.9 382.5 L73 379.2 L77 382.9 L77.4 388.4 L70.3 391.8 L66.3 388Z" stroke="#222" stroke-width="1.1" fill="#fff" stroke-linejoin="round"/>
<path d="M73.6 384.6 L73.9 390 L70.3 391.8 L66.3 388 L65.9 382.5 L69.6 380.8Z" stroke="#222" stroke-width="0.9" fill="#fff" stroke-linejoin="round"/>
<path d="M73.6 384.6 L77 382.9" stroke="#222" stroke-width="0.8" fill="none"/>
<path d="M73.9 390 L77.4 388.4" stroke="#222" stroke-width="0.8" fill="none"/>
<path d="M69.6 380.8 L73 379.2" stroke="#222" stroke-width="0.8" fill="none"/>
<ellipse cx="91.8" cy="375.4" rx="3.8" ry="5" stroke="#222" stroke-width="1.4" fill="#fff" transform="rotate(-20 91.8 375.4)"/>
<ellipse cx="92.1" cy="375.4" rx="1.9" ry="2.5" stroke="#222" stroke-width="0.9" fill="none" transform="rotate(-20 92.1 375.4)"/>
<path d="M171 368 C170.500 364.500 174 363.500 177 364.5 L180.5 367.5 L179.5 373.500 L175 375.500 C172 374.500 171 371.500 171 368Z" stroke="#222" stroke-width="1.2" fill="#666" stroke-linejoin="round" stroke-linecap="round"/>
<ellipse cx="177.5" cy="370.5" rx="2.4" ry="3" stroke="#222" stroke-width="0.8" fill="#fff"/>
<path d="M151 357.3 L170.4 367" stroke="#444" stroke-width="0.6" fill="none"/>
<path d="M243 276.500 C242.500 273 246 272 249 271.500 L253.500 272.5 L255.5 279.500 L247.5 283 C244.500 282 243.500 279.500 243 276.500Z" stroke="#222" stroke-width="1.1" fill="#eee" stroke-linejoin="round" stroke-linecap="round"/>
<path d="M246.500 281.500 L248.500 274 M248.500 281.500 L250.500 273.500 M250.500 281 L252.500 273.500 M252.500 280 L254 274.500" stroke="#444" stroke-width="0.7" fill="none" stroke-linejoin="round" stroke-linecap="round"/>
<path d="M279 283.1 L269.5 286.9 L271.5 291.7 L281 287.9Z" stroke="#222" stroke-width="0.9" fill="#fff" stroke-linejoin="round"/>
<path d="M277.1 283.8 L278.4 288.9" stroke="#1a1a1a" stroke-width="0.85" fill="none"/>
<path d="M276 284.3 L277.3 289.4" stroke="#1a1a1a" stroke-width="0.85" fill="none"/>
<path d="M274.9 284.7 L276.2 289.8" stroke="#1a1a1a" stroke-width="0.85" fill="none"/>
<path d="M273.8 285.2 L275.1 290.3" stroke="#1a1a1a" stroke-width="0.85" fill="none"/>
<path d="M272.7 285.6 L274 290.7" stroke="#1a1a1a" stroke-width="0.85" fill="none"/>
<path d="M271.6 286.1 L272.8 291.2" stroke="#1a1a1a" stroke-width="0.85" fill="none"/>
<path d="M275.2 282.5 L278.6 281.1 L282.1 279.7 L285.5 283.3 L285.5 288.2 L282 289.7 L278.6 291 L275.2 287.4Z" stroke="#222" stroke-width="1.1" fill="#fff" stroke-linejoin="round"/>
<path d="M278.8 286 L278.7 281.1 L282.1 279.7 L285.5 283.3 L285.5 288.2 L282.1 289.6Z" stroke="#222" stroke-width="0.9" fill="#fff" stroke-linejoin="round"/>
<path d="M278.8 286 L275.2 287.4" stroke="#222" stroke-width="0.8" fill="none"/>
<path d="M278.7 281.1 L275.2 282.5" stroke="#222" stroke-width="0.8" fill="none"/>
<path d="M282.1 289.6 L278.6 291" stroke="#222" stroke-width="0.8" fill="none"/>
<ellipse cx="266" cy="292.7" rx="3.8" ry="5.2" stroke="#222" stroke-width="1.4" fill="#fff" transform="rotate(-25 266 292.7)"/>
<ellipse cx="266.3" cy="292.7" rx="1.9" ry="2.6" stroke="#222" stroke-width="0.9" fill="none" transform="rotate(-25 266.3 292.7)"/>
<path d="M235.4 307.5 L262 294" stroke="#444" stroke-width="0.6" fill="none" stroke-dasharray="9 2 1.5 2"/>
<path d="M222 316 L229 320" stroke="#222" stroke-width="0.9" fill="none"/>
<path d="M45 426 C48 420 53 417 58 417 C65 417 71 421 75.500 429 C80 437 84 446 82.500 452 C81.500 456 79 457.500 76.200 458 L66.400 461.500 L57 466.400" stroke="#222" stroke-width="1.4" fill="#fff" stroke-linejoin="round" stroke-linecap="round"/>
<path d="M52 419.500 C60 418 68 423 72.500 431 C77 439 80 447 79 452.500 C78 456 76 457 74 457.500" stroke="#222" stroke-width="1.2" fill="none" stroke-linejoin="round" stroke-linecap="round"/>
<path d="M56 421.500 C63 422 68 427 71 434 C74 441 76 448 75 453.500" stroke="#555" stroke-width="0.6" fill="none" stroke-linejoin="round" stroke-linecap="round"/>
<ellipse cx="49.9" cy="446.3" rx="13.6" ry="19.6" stroke="#222" stroke-width="1.2" fill="#fff" transform="rotate(-14 49.9 446.3)"/>
<ellipse cx="47.5" cy="448.7" rx="10.6" ry="13.4" stroke="#222" stroke-width="0.9" fill="none" transform="rotate(-14 47.5 448.7)"/>
<ellipse cx="47.2" cy="449.2" rx="6.8" ry="8.6" stroke="#222" stroke-width="0.9" fill="none" transform="rotate(-14 47.2 449.2)"/>
<ellipse cx="47" cy="449.5" rx="3.4" ry="4.6" stroke="#222" stroke-width="0.9" fill="none" transform="rotate(-14 47 449.5)"/>
<path d="M55 428 C60 433 64 442 65 452 C65.500 457 65 460 64 462.500" stroke="#555" stroke-width="0.6" fill="none" stroke-linejoin="round" stroke-linecap="round"/>
<ellipse cx="48.5" cy="433.5" rx="1" ry="1.2" stroke="#222" stroke-width="0.8" fill="#222"/>
<ellipse cx="61" cy="453.5" rx="1" ry="1.2" stroke="#222" stroke-width="0.8" fill="#222"/>
<ellipse cx="37.5" cy="441" rx="0.8" ry="1" stroke="#222" stroke-width="0.8" fill="#222"/>
<ellipse cx="49.5" cy="463" rx="0.8" ry="1" stroke="#222" stroke-width="0.8" fill="#222"/>
<path d="M44.600 492 C47 484 52 479.500 57.400 479 C61 478.500 65 480 68.400 482.2 C72 485 75.500 489.500 78.100 494.4 C82 501 85 508 85.500 512.7 C86 516 85 519 83 521.3 C80 525 77 527.500 73.300 528 C69 528.500 66 528 63.500 526.8 L61 525" stroke="#222" stroke-width="1.5" fill="#fff" stroke-linejoin="round" stroke-linecap="round"/>
<path d="M52 482.500 C58 480.500 64 483 69 488 C75 494 80 504 81.500 512 C82.500 517 81 521 78 524" stroke="#222" stroke-width="1.1" fill="none" stroke-linejoin="round" stroke-linecap="round"/>
<path d="M57 486 C63 487 68 492 72 499 C76 506 77.500 513 76.500 518" stroke="#555" stroke-width="0.6" fill="none" stroke-linejoin="round" stroke-linecap="round"/>
<ellipse cx="50" cy="511" rx="10.8" ry="15.2" stroke="#222" stroke-width="1.2" fill="#fff" transform="rotate(-14 50 511)"/>
<path d="M56 497 C61 499 65 505 66.500 512 C67.500 517 67 520 65.500 522" stroke="#555" stroke-width="0.6" fill="none" stroke-linejoin="round" stroke-linecap="round"/>
<ellipse cx="48.4" cy="511.8" rx="5" ry="7" stroke="#222" stroke-width="0.9" fill="none" transform="rotate(-14 48.4 511.8)"/>
<ellipse cx="48.4" cy="511.8" rx="2.5" ry="3.6" stroke="#222" stroke-width="0.9" fill="none" transform="rotate(-14 48.4 511.8)"/>
<ellipse cx="50.5" cy="500.8" rx="0.9" ry="1.2" stroke="#222" stroke-width="0.8" fill="#222"/>
<ellipse cx="58.8" cy="516.5" rx="0.9" ry="1.2" stroke="#222" stroke-width="0.8" fill="#222"/>
<ellipse cx="41.5" cy="506" rx="0.8" ry="1" stroke="#222" stroke-width="0.8" fill="#222"/>
<ellipse cx="50" cy="521.5" rx="0.8" ry="1" stroke="#222" stroke-width="0.8" fill="#222"/>
<ellipse cx="36.8" cy="518.4" rx="4.6" ry="6.8" stroke="#222" stroke-width="1.4" fill="#fff" transform="rotate(-20 36.8 518.4)"/>
<ellipse cx="37.1" cy="518.4" rx="2.3" ry="3.4" stroke="#222" stroke-width="0.9" fill="none" transform="rotate(-20 37.1 518.4)"/>
<ellipse cx="27" cy="524" rx="4.6" ry="6.2" stroke="#222" stroke-width="1.4" fill="#fff" transform="rotate(-20 27 524)"/>
<path d="M30.500 521.500 L32.500 524.500" stroke="#fff" stroke-width="1.6" fill="none" stroke-linejoin="round" stroke-linecap="round"/>
<path d="M11.5 530.8 L11.7 524.6 L16.1 523 L18.3 522.2 L22.5 526.8 L22.3 533 L17.9 534.6 L15.7 535.4Z" stroke="#222" stroke-width="1.1" fill="#fff" stroke-linejoin="round"/>
<path d="M20.2 527.6 L20 533.8 L15.7 535.4 L11.5 530.8 L11.7 524.6 L16.1 523Z" stroke="#222" stroke-width="0.9" fill="#fff" stroke-linejoin="round"/>
<path d="M20.2 527.6 L22.5 526.8" stroke="#222" stroke-width="0.8" fill="none"/>
<path d="M20 533.8 L22.3 533" stroke="#222" stroke-width="0.8" fill="none"/>
<path d="M16.1 523 L18.3 522.2" stroke="#222" stroke-width="0.8" fill="none"/>
<ellipse cx="15.9" cy="529.2" rx="2.8" ry="3.8" stroke="#222" stroke-width="0.9" fill="none" transform="rotate(-20 15.9 529.2)"/>
<ellipse cx="15.9" cy="529.2" rx="1.5" ry="2" stroke="#222" stroke-width="0.8" fill="#555" transform="rotate(-20 15.9 529.2)"/>
<ellipse cx="87.6" cy="490.4" rx="6.4" ry="10.6" stroke="#222" stroke-width="1.6" fill="#fff" transform="rotate(-22 87.6 490.4)"/>
<ellipse cx="88.1" cy="490.4" rx="4.6" ry="8.4" stroke="#222" stroke-width="0.8" fill="none" transform="rotate(-22 88.1 490.4)"/>
<ellipse cx="97" cy="486" rx="7.6" ry="10.6" stroke="#222" stroke-width="1.1" fill="#fff" transform="rotate(-22 97 486)"/>
<ellipse cx="96.2" cy="486.3" rx="5.6" ry="8.4" transform="rotate(-22 96.2 486.3)" fill="none" stroke="#222" stroke-width="2.6" stroke-dasharray="2 1.3"/>
<ellipse cx="95.5" cy="486.5" rx="3.4" ry="5.6" stroke="#222" stroke-width="1" fill="#fff" transform="rotate(-22 95.5 486.5)"/>
<ellipse cx="95" cy="486.8" rx="2" ry="3.4" stroke="#222" stroke-width="0.8" fill="none" transform="rotate(-22 95 486.8)"/>
<ellipse cx="116.6" cy="475" rx="8.6" ry="11" stroke="#222" stroke-width="1.1" fill="#fff" transform="rotate(-22 116.6 475)"/>
<ellipse cx="115.6" cy="475.3" rx="6.2" ry="8.6" transform="rotate(-22 115.6 475.3)" fill="none" stroke="#222" stroke-width="2.6" stroke-dasharray="2 1.3"/>
<ellipse cx="115" cy="475.5" rx="3.8" ry="5.8" stroke="#222" stroke-width="1" fill="#fff" transform="rotate(-22 115 475.5)"/>
<ellipse cx="114.5" cy="475.8" rx="2.2" ry="3.6" stroke="#222" stroke-width="0.8" fill="none" transform="rotate(-22 114.5 475.8)"/>
<path d="M102 478.500 L109 475 L112 483 L105.5 486.500Z" stroke="#222" stroke-width="0.9" fill="#fff" stroke-linejoin="round" stroke-linecap="round"/>
<ellipse cx="130.3" cy="467.5" rx="6.6" ry="9" stroke="#222" stroke-width="1.4" fill="#fff" transform="rotate(-22 130.3 467.5)"/>
<ellipse cx="130.6" cy="467.5" rx="3.3" ry="4.5" stroke="#222" stroke-width="0.9" fill="none" transform="rotate(-22 130.6 467.5)"/>
<ellipse cx="130.5" cy="467.5" rx="5" ry="7" stroke="#222" stroke-width="0.6" fill="none" transform="rotate(-22 130.5 467.5)"/>
<ellipse cx="139.7" cy="463.7" rx="5" ry="7" stroke="#222" stroke-width="1.4" fill="#fff" transform="rotate(-22 139.7 463.7)"/>
<ellipse cx="140" cy="463.7" rx="2.5" ry="3.5" stroke="#222" stroke-width="0.9" fill="none" transform="rotate(-22 140 463.7)"/>
<ellipse cx="149" cy="458" rx="4.8" ry="7" stroke="#222" stroke-width="1.6" fill="#fff" transform="rotate(-22 149 458)"/>
<ellipse cx="149.5" cy="458" rx="2.8" ry="4.6" stroke="#222" stroke-width="0.8" fill="none" transform="rotate(-22 149.5 458)"/>
<path d="M165 403.8 L177 396.6 L208.900 409.3 C213 411 215.500 414 215.500 417 L217 429 L226.500 435.7 C228 440 227 448 224 450.5 L215.500 452 L196.8 463.7 L196.8 481 C196.800 485 176.500 485 176.500 481.8 L176 462 C170 464.500 162 464.500 157.500 462 C150 458 149 446 153.500 440.500 L163 432 L165 425 L157 415 C155 411 158 408 161 407Z" stroke="#222" stroke-width="1.2" fill="#fff" stroke-linejoin="round" stroke-linecap="round"/>
<ellipse cx="160.5" cy="452" rx="8.8" ry="12.2" stroke="#222" stroke-width="1.2" fill="#fff" transform="rotate(-14 160.5 452)"/>
<ellipse cx="161.5" cy="452" rx="7.2" ry="10.4" stroke="#222" stroke-width="0.7" fill="none" transform="rotate(-14 161.5 452)"/>
<path d="M163 432 C170 430 177 434 181 441 C185 449 184 456 176 462 M167 440.500 C172 441 176 446 176.500 453" stroke="#333" stroke-width="0.7" fill="none" stroke-linejoin="round" stroke-linecap="round"/>
<path d="M185 419 C192 428 196 440 196.8 463.7 M190 417.500 C197 426 200 437 200.500 449" stroke="#444" stroke-width="0.7" fill="none" stroke-linejoin="round" stroke-linecap="round"/>
<ellipse cx="221" cy="443.4" rx="4.4" ry="7" stroke="#222" stroke-width="1.1" fill="#fff" transform="rotate(12 221 443.4)"/>
<path d="M209.500 446 L215.500 452 M207 431 L217 429" stroke="#222" stroke-width="0.9" fill="none" stroke-linejoin="round" stroke-linecap="round"/>
<ellipse cx="169.5" cy="407.5" rx="1.6" ry="2.6" stroke="#222" stroke-width="0.8" fill="none" transform="rotate(-15 169.5 407.5)"/>
<ellipse cx="182.5" cy="403.3" rx="5.6" ry="3" stroke="#222" stroke-width="1.1" fill="#fff" transform="rotate(12 182.5 403.3)"/>
<path d="M177 404 L177 414 L169 420 M188 404 L188 409" stroke="#222" stroke-width="0.9" fill="none" stroke-linejoin="round" stroke-linecap="round"/>
<ellipse cx="202.5" cy="421.5" rx="2.6" ry="3.6" stroke="#222" stroke-width="0.9" fill="none" transform="rotate(-15 202.5 421.5)"/>
<ellipse cx="205" cy="452.8" rx="2.4" ry="3.4" stroke="#222" stroke-width="0.9" fill="none" transform="rotate(-15 205 452.8)"/>
<path d="M161 407 L172 421.500 L178 416.500" stroke="#222" stroke-width="0.9" fill="none" stroke-linejoin="round" stroke-linecap="round"/>
<path d="M150.500 402 C150.500 399.500 153 398.500 155.500 399 L158.500 401.5 L157.5 405.500 L153.500 407.5Z" stroke="#222" stroke-width="1.1" fill="#777" stroke-linejoin="round" stroke-linecap="round"/>
<path d="M141.3 410.4 L150 406" stroke="#222" stroke-width="0.9" fill="none"/>
<path d="M206.7 395 L206.7 407.6" stroke="#222" stroke-width="0.9" fill="none"/>
<path d="M218.2 423.5 L226.7 419.4 L224.3 414.4 L215.8 418.5Z" stroke="#222" stroke-width="1.0" fill="#888" stroke-linejoin="round"/>
<path d="M227.3 420.6 L250.3 409 L246.7 401.6 L223.7 413.2Z" stroke="#222" stroke-width="1.0" fill="#fff" stroke-linejoin="round"/>
<path d="M250.2 408.7 L268.7 399.6 L265.3 392.8 L246.8 401.9Z" stroke="#222" stroke-width="1.0" fill="#fff" stroke-linejoin="round"/>
<path d="M250.3 409 L254.3 407 L250.7 399.6 L246.7 401.6Z" stroke="#222" stroke-width="1.0" fill="#fff" stroke-linejoin="round"/>
<path d="M232 387 L240.9 404" stroke="#222" stroke-width="0.9" fill="none"/>
<ellipse cx="273.8" cy="391.4" rx="8" ry="9.6" stroke="#222" stroke-width="1.3" fill="#fff" transform="rotate(-20 273.8 391.4)"/>
<ellipse cx="272.5" cy="392" rx="5.4" ry="7" stroke="#222" stroke-width="0.9" fill="none" transform="rotate(-20 272.5 392)"/>
<ellipse cx="272" cy="392.3" rx="3.4" ry="4.8" stroke="#222" stroke-width="0.7" fill="none" transform="rotate(-20 272 392.3)"/>
<path d="M268 383 C272 381 278 383 281 388" stroke="#222" stroke-width="1.6" fill="none" stroke-linejoin="round" stroke-linecap="round"/>
<ellipse cx="285.4" cy="384.8" rx="4.4" ry="6" stroke="#222" stroke-width="1.3" fill="#fff" transform="rotate(-20 285.4 384.8)"/>
<ellipse cx="285.4" cy="384.8" rx="2.8" ry="4.2" stroke="#222" stroke-width="0.8" fill="none" transform="rotate(-20 285.4 384.8)"/>
<path d="M287.500 361 C296 355 310 361 314.500 376 C317 386 313 394 305.500 397 L298 392 L291 391 L288 385 L288 376 L282.500 372.500 L288.5 368.5Z" stroke="#222" stroke-width="1.2" fill="#fff" stroke-linejoin="round" stroke-linecap="round"/>
<path d="M287.500 361 L293.500 366.500 L299 364 M282.500 372.5 L292 369 M301.500 369.5 L306 367.500 L306 373.500 L301.5 375.5Z M303 386 L313 382 M298 392 L305 388.500 M306 362.500 C311 369 313 380 310 391" stroke="#333" stroke-width="0.8" fill="none" stroke-linejoin="round" stroke-linecap="round"/>
<ellipse cx="295.5" cy="380" rx="3.6" ry="5" stroke="#222" stroke-width="0.9" fill="none" transform="rotate(-15 295.5 380)"/>
<ellipse cx="295.5" cy="380" rx="2.2" ry="3.4" stroke="#222" stroke-width="0.7" fill="none" transform="rotate(-15 295.5 380)"/>
<path d="M232.500 478.8 L246.4 465 C248 462 251 460.500 255 461 L315.2 484 L311.600 519 L304.200 525 L290.300 536.7 C286 538.500 281 538.500 278.600 537.4 L266.9 541" stroke="#222" stroke-width="1.1" fill="#fff" stroke-linejoin="round" stroke-linecap="round"/>
<path d="M255 458.3 C257 456.500 260 456.500 262 457.500 L314 480.500 C317 482 318 485 317 488 L313 519.500 L304.200 526 L303.500 522 L306.400 490 L311 486.500 L253.5 462.500Z" stroke="#222" stroke-width="1.1" fill="url(#dots)" stroke-linejoin="round" stroke-linecap="round"/>
<ellipse cx="312.8" cy="486.5" rx="1.6" ry="2.2" stroke="#222" stroke-width="0.9" fill="#fff"/>
<ellipse cx="305.8" cy="517.5" rx="1.9" ry="2.6" stroke="#222" stroke-width="0.9" fill="#fff"/>
<ellipse cx="305" cy="490.5" rx="1.4" ry="2" stroke="#222" stroke-width="0.8" fill="#fff"/>
<path d="M302 494 L302 522" stroke="#333" stroke-width="0.7" fill="none"/>
<ellipse cx="296.5" cy="523" rx="1.1" ry="1.5" stroke="#222" stroke-width="0.8" fill="#333"/>
<path d="M243.1 479.5 L260.7 469.9 A2.4 2.4 0 0 0 258.5 465.7 L240.9 475.3 A2.4 2.4 0 0 0 243.1 479.5Z" stroke="#222" stroke-width="0.9" fill="#fff" stroke-linejoin="round" stroke-linecap="round"/>
<path d="M244.3 478.5 L243 474.5" stroke="#222" stroke-width="0.8" fill="none"/>
<path d="M245.4 477.9 L244.2 473.9" stroke="#222" stroke-width="0.8" fill="none"/>
<path d="M246.6 477.2 L245.3 473.3" stroke="#222" stroke-width="0.8" fill="none"/>
<path d="M247.7 476.6 L246.5 472.6" stroke="#222" stroke-width="0.8" fill="none"/>
<path d="M248.9 476 L247.6 472" stroke="#222" stroke-width="0.8" fill="none"/>
<path d="M250 475.4 L248.7 471.4" stroke="#222" stroke-width="0.8" fill="none"/>
<path d="M229.500 486.9 C229 481 230.500 478 232.500 478.8 L274.200 492.7 C276.500 494 277.500 496 277.500 499 L277.900 528 L266.9 541 C258 541.500 246 538 237.600 531.6 C233 519 230 500 229.500 486.9Z" stroke="#222" stroke-width="1.3" fill="url(#dots)" stroke-linejoin="round" stroke-linecap="round"/>
<path d="M234.700 485.4 C238 482.500 250 485 258 493 C268.400 503 271.500 514 271.300 525 L264 536.7 C256 536 247 531 242 523 C236.500 514 233.500 498 234.700 485.4Z" stroke="#222" stroke-width="1.0" fill="#fff" stroke-linejoin="round" stroke-linecap="round"/>
<ellipse cx="234.5" cy="482.5" rx="1.5" ry="2" stroke="#222" stroke-width="0.8" fill="#fff"/>
<ellipse cx="271" cy="495.8" rx="1.7" ry="2.2" stroke="#222" stroke-width="0.9" fill="#fff"/>
<ellipse cx="274" cy="528" rx="1.9" ry="2.4" stroke="#222" stroke-width="0.9" fill="#fff"/>
<ellipse cx="240" cy="530.5" rx="1.6" ry="2.1" stroke="#222" stroke-width="0.8" fill="#fff"/>
<ellipse cx="262.5" cy="527.5" rx="1.5" ry="2" stroke="#222" stroke-width="0.8" fill="#333"/>
<path d="M248 487.500 C250 505 255 520 266 530" stroke="#333" stroke-width="0.7" fill="none" stroke-linejoin="round" stroke-linecap="round"/>
<path d="M247.6 529.3 L265.2 519.1 A2.4 2.4 0 0 0 262.8 514.9 L245.2 525.1 A2.4 2.4 0 0 0 247.6 529.3Z" stroke="#222" stroke-width="0.9" fill="#fff" stroke-linejoin="round" stroke-linecap="round"/>
<path d="M248.7 528.2 L247.4 524.3" stroke="#222" stroke-width="0.8" fill="none"/>
<path d="M249.8 527.6 L248.5 523.6" stroke="#222" stroke-width="0.8" fill="none"/>
<path d="M251 526.9 L249.6 523" stroke="#222" stroke-width="0.8" fill="none"/>
<path d="M252.1 526.3 L250.7 522.3" stroke="#222" stroke-width="0.8" fill="none"/>
<path d="M253.2 525.6 L251.9 521.7" stroke="#222" stroke-width="0.8" fill="none"/>
<path d="M254.3 525 L253 521" stroke="#222" stroke-width="0.8" fill="none"/>
<path d="M255.5 524.3 L254.1 520.4" stroke="#222" stroke-width="0.8" fill="none"/>
<path d="M276.8 493.4 L295.8 483.1 A2.4 2.4 0 0 0 293.6 478.9 L274.6 489.2 A2.4 2.4 0 0 0 276.8 493.4Z" stroke="#222" stroke-width="0.9" fill="#fff" stroke-linejoin="round" stroke-linecap="round"/>
<path d="M278 492.4 L276.7 488.4" stroke="#222" stroke-width="0.8" fill="none"/>
<path d="M279.1 491.8 L277.9 487.8" stroke="#222" stroke-width="0.8" fill="none"/>
<path d="M280.3 491.1 L279 487.2" stroke="#222" stroke-width="0.8" fill="none"/>
<path d="M281.4 490.5 L280.2 486.6" stroke="#222" stroke-width="0.8" fill="none"/>
<path d="M282.6 489.9 L281.3 485.9" stroke="#222" stroke-width="0.8" fill="none"/>
<path d="M283.7 489.3 L282.5 485.3" stroke="#222" stroke-width="0.8" fill="none"/>
<path d="M284.8 488.7 L283.6 484.7" stroke="#222" stroke-width="0.8" fill="none"/>
<path d="M280.5 525.6 L299.6 514.6 A2.4 2.4 0 0 0 297.2 510.4 L278.1 521.4 A2.4 2.4 0 0 0 280.5 525.6Z" stroke="#222" stroke-width="0.9" fill="#fff" stroke-linejoin="round" stroke-linecap="round"/>
<path d="M281.6 524.5 L280.3 520.6" stroke="#222" stroke-width="0.8" fill="none"/>
<path d="M282.7 523.9 L281.4 519.9" stroke="#222" stroke-width="0.8" fill="none"/>
<path d="M283.9 523.2 L282.5 519.3" stroke="#222" stroke-width="0.8" fill="none"/>
<path d="M285 522.6 L283.7 518.6" stroke="#222" stroke-width="0.8" fill="none"/>
<path d="M286.1 521.9 L284.8 518" stroke="#222" stroke-width="0.8" fill="none"/>
<path d="M287.3 521.3 L285.9 517.3" stroke="#222" stroke-width="0.8" fill="none"/>
<path d="M288.4 520.6 L287 516.7" stroke="#222" stroke-width="0.8" fill="none"/>
<path d="M222 532.5 L246 518.5" stroke="#555" stroke-width="0.5" fill="none"/>
<path d="M243 536 L262 527.5" stroke="#555" stroke-width="0.5" fill="none" stroke-dasharray="8 2 1 2"/>
<path d="M199.1 501 L213.1 494.4 L210.9 489.6 L196.9 496.2Z" stroke="#222" stroke-width="0.9" fill="#fff" stroke-linejoin="round"/>
<path d="M205.4 498 L203.8 493" stroke="#1a1a1a" stroke-width="0.85" fill="none"/>
<path d="M206.5 497.5 L204.9 492.5" stroke="#1a1a1a" stroke-width="0.85" fill="none"/>
<path d="M207.6 497 L206 492" stroke="#1a1a1a" stroke-width="0.85" fill="none"/>
<path d="M208.7 496.4 L207.1 491.4" stroke="#1a1a1a" stroke-width="0.85" fill="none"/>
<path d="M209.8 495.9 L208.2 490.9" stroke="#1a1a1a" stroke-width="0.85" fill="none"/>
<path d="M210.8 495.4 L209.3 490.4" stroke="#1a1a1a" stroke-width="0.85" fill="none"/>
<path d="M211.9 494.9 L210.3 489.9" stroke="#1a1a1a" stroke-width="0.85" fill="none"/>
<path d="M192.2 496.1 L195.7 494.4 L199 492.8 L202.8 496.4 L203.1 501.5 L199.7 503.1 L196.3 504.7 L192.6 501.2Z" stroke="#222" stroke-width="1.1" fill="#fff" stroke-linejoin="round"/>
<path d="M199.3 498 L199.7 503.1 L196.3 504.7 L192.6 501.2 L192.2 496.1 L195.6 494.5Z" stroke="#222" stroke-width="0.9" fill="#fff" stroke-linejoin="round"/>
<path d="M199.3 498 L202.8 496.4" stroke="#222" stroke-width="0.8" fill="none"/>
<path d="M199.7 503.1 L203.1 501.5" stroke="#222" stroke-width="0.8" fill="none"/>
<path d="M195.6 494.5 L199 492.8" stroke="#222" stroke-width="0.8" fill="none"/>
<ellipse cx="217" cy="487.6" rx="4.2" ry="5.4" stroke="#222" stroke-width="1.4" fill="#fff" transform="rotate(-25 217 487.6)"/>
<ellipse cx="217.3" cy="487.6" rx="2.1" ry="2.7" stroke="#222" stroke-width="0.9" fill="none" transform="rotate(-25 217.3 487.6)"/>
<path d="M205 507.6 L208.6 505.9 L210.8 504.9 L214.7 508.5 L215 513.8 L211.4 515.5 L209.2 516.5 L205.3 512.9Z" stroke="#222" stroke-width="1.1" fill="#fff" stroke-linejoin="round"/>
<path d="M212.5 509.5 L212.8 514.8 L209.2 516.5 L205.3 512.9 L205 507.6 L208.6 505.9Z" stroke="#222" stroke-width="0.9" fill="#fff" stroke-linejoin="round"/>
<path d="M212.5 509.5 L214.7 508.5" stroke="#222" stroke-width="0.8" fill="none"/>
<path d="M212.8 514.8 L215 513.8" stroke="#222" stroke-width="0.8" fill="none"/>
<path d="M208.6 505.9 L210.8 504.9" stroke="#222" stroke-width="0.8" fill="none"/>
<ellipse cx="208.9" cy="511.2" rx="2.4" ry="3.3" stroke="#222" stroke-width="0.9" fill="none" transform="rotate(-25 208.9 511.2)"/>
<ellipse cx="208.9" cy="511.2" rx="1.2" ry="1.7" stroke="#222" stroke-width="0.8" fill="#555" transform="rotate(-25 208.9 511.2)"/>
<ellipse cx="219.3" cy="505.2" rx="4.2" ry="5.4" stroke="#222" stroke-width="1.3" fill="#fff" transform="rotate(-25 219.3 505.2)"/>
<ellipse cx="219.5" cy="505.2" rx="2.2" ry="3.2" stroke="#222" stroke-width="0.8" fill="none" transform="rotate(-25 219.5 505.2)"/>
<path d="M226 489 L228 494 L225 510" stroke="#444" stroke-width="0.6" fill="none"/>
<path d="M285.7 454.9 L295.9 449.7 L293.5 444.9 L283.3 450.1Z" stroke="#222" stroke-width="0.9" fill="#fff" stroke-linejoin="round"/>
<path d="M287.8 453.9 L285.9 448.7" stroke="#1a1a1a" stroke-width="0.85" fill="none"/>
<path d="M288.8 453.3 L287 448.2" stroke="#1a1a1a" stroke-width="0.85" fill="none"/>
<path d="M289.9 452.8 L288.1 447.6" stroke="#1a1a1a" stroke-width="0.85" fill="none"/>
<path d="M291 452.2 L289.1 447.1" stroke="#1a1a1a" stroke-width="0.85" fill="none"/>
<path d="M292 451.7 L290.2 446.6" stroke="#1a1a1a" stroke-width="0.85" fill="none"/>
<path d="M293.1 451.1 L291.3 446" stroke="#1a1a1a" stroke-width="0.85" fill="none"/>
<path d="M294.2 450.6 L292.4 445.5" stroke="#1a1a1a" stroke-width="0.85" fill="none"/>
<path d="M278.6 450.1 L282 448.4 L285.4 446.7 L289.2 450.1 L289.7 455.2 L286.4 456.9 L283 458.6 L279.1 455.2Z" stroke="#222" stroke-width="1.1" fill="#fff" stroke-linejoin="round"/>
<path d="M285.8 451.8 L286.3 456.9 L283 458.6 L279.1 455.2 L278.6 450.1 L282 448.4Z" stroke="#222" stroke-width="0.9" fill="#fff" stroke-linejoin="round"/>
<path d="M285.8 451.8 L289.2 450.1" stroke="#222" stroke-width="0.8" fill="none"/>
<path d="M286.3 456.9 L289.7 455.2" stroke="#222" stroke-width="0.8" fill="none"/>
<path d="M282 448.4 L285.4 446.7" stroke="#222" stroke-width="0.8" fill="none"/>
<ellipse cx="299.7" cy="443.4" rx="4.8" ry="5.4" stroke="#222" stroke-width="1.4" fill="#fff" transform="rotate(-30 299.7 443.4)"/>
<ellipse cx="300" cy="443.4" rx="2.4" ry="2.7" stroke="#222" stroke-width="0.9" fill="none" transform="rotate(-30 300 443.4)"/>
<path d="M300.3 464.3 L310.7 458.3 L308.1 453.7 L297.7 459.7Z" stroke="#222" stroke-width="0.9" fill="#fff" stroke-linejoin="round"/>
<path d="M302.4 463.1 L300.3 458.1" stroke="#1a1a1a" stroke-width="0.85" fill="none"/>
<path d="M303.5 462.5 L301.4 457.5" stroke="#1a1a1a" stroke-width="0.85" fill="none"/>
<path d="M304.5 461.9 L302.4 456.9" stroke="#1a1a1a" stroke-width="0.85" fill="none"/>
<path d="M305.5 461.3 L303.5 456.3" stroke="#1a1a1a" stroke-width="0.85" fill="none"/>
<path d="M306.6 460.7 L304.5 455.7" stroke="#1a1a1a" stroke-width="0.85" fill="none"/>
<path d="M307.6 460.1 L305.5 455.1" stroke="#1a1a1a" stroke-width="0.85" fill="none"/>
<path d="M308.7 459.5 L306.6 454.5" stroke="#1a1a1a" stroke-width="0.85" fill="none"/>
<path d="M309.7 458.9 L307.6 453.9" stroke="#1a1a1a" stroke-width="0.85" fill="none"/>
<path d="M292.4 459.5 L299.4 455.4 L304 459.1 L304.9 464.9 L301.6 466.8 L297.9 468.9 L293.3 465.3Z" stroke="#222" stroke-width="1.1" fill="#fff" stroke-linejoin="round"/>
<path d="M300.7 461 L301.6 466.8 L297.9 468.9 L293.3 465.3 L292.4 459.5 L296.2 457.3Z" stroke="#222" stroke-width="0.9" fill="#fff" stroke-linejoin="round"/>
<path d="M300.7 461 L304 459.1" stroke="#222" stroke-width="0.8" fill="none"/>
<path d="M301.6 466.8 L304.9 464.9" stroke="#222" stroke-width="0.8" fill="none"/>
<path d="M296.2 457.3 L299.4 455.4" stroke="#222" stroke-width="0.8" fill="none"/>
<ellipse cx="312.3" cy="454" rx="4.8" ry="6.4" stroke="#222" stroke-width="1.3" fill="#fff" transform="rotate(-25 312.3 454)"/>
<ellipse cx="312.6" cy="454" rx="2.4" ry="3.2" stroke="#222" stroke-width="0.9" fill="none" transform="rotate(-25 312.6 454)"/>
<path d="M223.3 554.3 L235 547.6 L232.4 543 L220.7 549.7Z" stroke="#222" stroke-width="0.9" fill="#fff" stroke-linejoin="round"/>
<path d="M226.8 552.2 L224.8 547.4" stroke="#1a1a1a" stroke-width="0.85" fill="none"/>
<path d="M227.8 551.6 L225.9 546.8" stroke="#1a1a1a" stroke-width="0.85" fill="none"/>
<path d="M228.9 551.1 L226.9 546.2" stroke="#1a1a1a" stroke-width="0.85" fill="none"/>
<path d="M229.9 550.5 L227.9 545.6" stroke="#1a1a1a" stroke-width="0.85" fill="none"/>
<path d="M231 549.9 L229 545" stroke="#1a1a1a" stroke-width="0.85" fill="none"/>
<path d="M232 549.3 L230 544.4" stroke="#1a1a1a" stroke-width="0.85" fill="none"/>
<path d="M233.1 548.7 L231.1 543.8" stroke="#1a1a1a" stroke-width="0.85" fill="none"/>
<path d="M216 549.9 L219.3 548 L222.6 546.2 L226.6 549.4 L227.3 554.4 L224.1 556.3 L220.8 558.2 L216.8 555Z" stroke="#222" stroke-width="1.1" fill="#fff" stroke-linejoin="round"/>
<path d="M223.3 551.3 L224 556.3 L220.8 558.2 L216.8 555 L216 549.9 L219.3 548.1Z" stroke="#222" stroke-width="0.9" fill="#fff" stroke-linejoin="round"/>
<path d="M223.3 551.3 L226.6 549.4" stroke="#222" stroke-width="0.8" fill="none"/>
<path d="M224 556.3 L227.3 554.4" stroke="#222" stroke-width="0.8" fill="none"/>
<path d="M219.3 548.1 L222.6 546.2" stroke="#222" stroke-width="0.8" fill="none"/>
<ellipse cx="238" cy="542" rx="4.2" ry="5.8" stroke="#222" stroke-width="1.4" fill="#fff" transform="rotate(-25 238 542)"/>
<ellipse cx="238.3" cy="542" rx="2.1" ry="2.9" stroke="#222" stroke-width="0.9" fill="none" transform="rotate(-25 238.3 542)"/>
<path d="M281.500 588 L314.5 616.5 L306.800 649.7 L302.400 652.4 L293.600 646.4 L295.8 638.7 L300.200 642 L306.800 619.8 L290.300 607.7Z" stroke="#222" stroke-width="1.1" fill="url(#dots)" stroke-linejoin="round" stroke-linecap="round"/>
<ellipse cx="310.5" cy="617.5" rx="1.5" ry="2" stroke="#222" stroke-width="0.8" fill="#fff"/>
<ellipse cx="302" cy="647" rx="1.5" ry="2" stroke="#222" stroke-width="0.8" fill="#fff"/>
<path d="M247.500 557 C247 553.500 253 553 254.500 556.5 L256.5 563 L268.400 571.5 L279.500 588 L247.500 572.5Z" stroke="#222" stroke-width="1.1" fill="url(#dots)" stroke-linejoin="round" stroke-linecap="round"/>
<ellipse cx="250.8" cy="557.3" rx="1.6" ry="2" stroke="#222" stroke-width="0.9" fill="#fff"/>
<path d="M229.300 569.3 C229 566.500 231 565.500 233 566.300 L281.500 588 L297 629.7 L288.700 660.7 C288 664 284 664.500 281.500 660.7 L230.400 608.8Z" stroke="#222" stroke-width="1.2" fill="#fff" stroke-linejoin="round" stroke-linecap="round"/>
<ellipse cx="233.5" cy="570.3" rx="0.9" ry="1.3" stroke="#222" stroke-width="0.8" fill="#333"/>
<ellipse cx="278.5" cy="590.5" rx="1.2" ry="1.6" stroke="#222" stroke-width="0.8" fill="#333"/>
<ellipse cx="233.5" cy="608" rx="1.1" ry="1.5" stroke="#222" stroke-width="0.8" fill="#333"/>
<ellipse cx="292" cy="628.5" rx="1.3" ry="1.8" stroke="#222" stroke-width="0.8" fill="none"/>
<ellipse cx="283.5" cy="658.5" rx="1.2" ry="1.7" stroke="#222" stroke-width="0.8" fill="#333"/>
<path d="M227.8 591.1 L246.5 580.7 A2.4 2.4 0 0 0 244.1 576.5 L225.4 586.9 A2.4 2.4 0 0 0 227.8 591.1Z" stroke="#222" stroke-width="0.9" fill="#fff" stroke-linejoin="round" stroke-linecap="round"/>
<path d="M228.9 590.1 L227.6 586.1" stroke="#222" stroke-width="0.8" fill="none"/>
<path d="M230 589.4 L228.8 585.5" stroke="#222" stroke-width="0.8" fill="none"/>
<path d="M231.2 588.8 L229.9 584.8" stroke="#222" stroke-width="0.8" fill="none"/>
<path d="M232.3 588.2 L231 584.2" stroke="#222" stroke-width="0.8" fill="none"/>
<path d="M233.4 587.5 L232.2 583.6" stroke="#222" stroke-width="0.8" fill="none"/>
<path d="M234.6 586.9 L233.3 582.9" stroke="#222" stroke-width="0.8" fill="none"/>
<path d="M235.7 586.3 L234.4 582.3" stroke="#222" stroke-width="0.8" fill="none"/>
<path d="M268.5 635.1 L286 624.7 A2.4 2.4 0 0 0 283.6 620.5 L266.1 630.9 A2.4 2.4 0 0 0 268.5 635.1Z" stroke="#222" stroke-width="0.9" fill="#fff" stroke-linejoin="round" stroke-linecap="round"/>
<path d="M269.6 634 L268.2 630.1" stroke="#222" stroke-width="0.8" fill="none"/>
<path d="M270.7 633.3 L269.4 629.4" stroke="#222" stroke-width="0.8" fill="none"/>
<path d="M271.9 632.7 L270.5 628.7" stroke="#222" stroke-width="0.8" fill="none"/>
<path d="M273 632 L271.6 628.1" stroke="#222" stroke-width="0.8" fill="none"/>
<path d="M274.1 631.3 L272.7 627.4" stroke="#222" stroke-width="0.8" fill="none"/>
<path d="M275.2 630.7 L273.8 626.8" stroke="#222" stroke-width="0.8" fill="none"/>
<path d="M276.3 630 L274.9 626.1" stroke="#222" stroke-width="0.8" fill="none"/>
<path d="M236 639.5 L253.6 629.6 A2.4 2.4 0 0 0 251.2 625.4 L233.6 635.3 A2.4 2.4 0 0 0 236 639.5Z" stroke="#222" stroke-width="0.9" fill="#fff" stroke-linejoin="round" stroke-linecap="round"/>
<path d="M237.1 638.4 L235.8 634.5" stroke="#222" stroke-width="0.8" fill="none"/>
<path d="M238.2 637.8 L236.9 633.9" stroke="#222" stroke-width="0.8" fill="none"/>
<path d="M239.4 637.2 L238.1 633.2" stroke="#222" stroke-width="0.8" fill="none"/>
<path d="M240.5 636.5 L239.2 632.6" stroke="#222" stroke-width="0.8" fill="none"/>
<path d="M241.6 635.9 L240.3 631.9" stroke="#222" stroke-width="0.8" fill="none"/>
<path d="M242.8 635.3 L241.5 631.3" stroke="#222" stroke-width="0.8" fill="none"/>
<path d="M238.7 616 L279.3 590" stroke="#444" stroke-width="0.6" fill="none" stroke-dasharray="12 2 1.5 2"/>
<path d="M297.7 576.2 L282.4 584.6 L285 589.4 L300.3 581Z" stroke="#222" stroke-width="0.9" fill="#fff" stroke-linejoin="round"/>
<path d="M293.1 578.8 L295.1 583.8" stroke="#1a1a1a" stroke-width="0.85" fill="none"/>
<path d="M292.1 579.3 L294 584.4" stroke="#1a1a1a" stroke-width="0.85" fill="none"/>
<path d="M291 579.9 L293 585" stroke="#1a1a1a" stroke-width="0.85" fill="none"/>
<path d="M290 580.5 L291.9 585.6" stroke="#1a1a1a" stroke-width="0.85" fill="none"/>
<path d="M288.9 581.1 L290.9 586.1" stroke="#1a1a1a" stroke-width="0.85" fill="none"/>
<path d="M287.9 581.6 L289.8 586.7" stroke="#1a1a1a" stroke-width="0.85" fill="none"/>
<path d="M286.8 582.2 L288.8 587.3" stroke="#1a1a1a" stroke-width="0.85" fill="none"/>
<path d="M285.7 582.8 L287.7 587.9" stroke="#1a1a1a" stroke-width="0.85" fill="none"/>
<path d="M284.7 583.4 L286.7 588.4" stroke="#1a1a1a" stroke-width="0.85" fill="none"/>
<path d="M283.6 584 L285.6 589" stroke="#1a1a1a" stroke-width="0.85" fill="none"/>
<path d="M293.5 575.8 L296.8 574 L300.3 572.1 L304.5 575.6 L305.2 581 L298.4 584.8 L294.2 581.3Z" stroke="#222" stroke-width="1.1" fill="#fff" stroke-linejoin="round"/>
<path d="M297.5 579.4 L296.8 574 L300.3 572.1 L304.5 575.6 L305.2 581 L301.7 582.9Z" stroke="#222" stroke-width="0.9" fill="#fff" stroke-linejoin="round"/>
<path d="M297.5 579.4 L294.2 581.3" stroke="#222" stroke-width="0.8" fill="none"/>
<path d="M296.8 574 L293.5 575.8" stroke="#222" stroke-width="0.8" fill="none"/>
<path d="M301.7 582.9 L298.4 584.8" stroke="#222" stroke-width="0.8" fill="none"/>
<ellipse cx="232" cy="619.8" rx="3.8" ry="4.8" stroke="#222" stroke-width="1.4" fill="#fff" transform="rotate(-25 232 619.8)"/>
<ellipse cx="232.3" cy="619.8" rx="1.9" ry="2.4" stroke="#222" stroke-width="0.9" fill="none" transform="rotate(-25 232.3 619.8)"/>
<path d="M249.7 645.8 L279.9 661.8" stroke="#444" stroke-width="0.6" fill="none"/>
<ellipse cx="244.7" cy="649" rx="4.8" ry="6" stroke="#222" stroke-width="1.4" fill="#fff" transform="rotate(-25 244.7 649)"/>
<ellipse cx="245" cy="649" rx="2.4" ry="3" stroke="#222" stroke-width="0.9" fill="none" transform="rotate(-25 245 649)"/>
<path d="M227.1 664 L238.1 656.2 L234.9 651.8 L223.9 659.6Z" stroke="#222" stroke-width="0.9" fill="#fff" stroke-linejoin="round"/>
<path d="M229.3 662.4 L226.7 657.6" stroke="#1a1a1a" stroke-width="0.85" fill="none"/>
<path d="M230.2 661.7 L227.7 656.9" stroke="#1a1a1a" stroke-width="0.85" fill="none"/>
<path d="M231.2 661.1 L228.7 656.2" stroke="#1a1a1a" stroke-width="0.85" fill="none"/>
<path d="M232.2 660.4 L229.6 655.6" stroke="#1a1a1a" stroke-width="0.85" fill="none"/>
<path d="M233.2 659.7 L230.6 654.9" stroke="#1a1a1a" stroke-width="0.85" fill="none"/>
<path d="M234.2 659 L231.6 654.2" stroke="#1a1a1a" stroke-width="0.85" fill="none"/>
<path d="M235.1 658.3 L232.6 653.5" stroke="#1a1a1a" stroke-width="0.85" fill="none"/>
<path d="M236.1 657.6 L233.6 652.8" stroke="#1a1a1a" stroke-width="0.85" fill="none"/>
<path d="M219 660.1 L222.1 657.9 L225.4 655.6 L230 658.6 L231.3 663.9 L228.1 666.2 L225 668.4 L220.4 665.4Z" stroke="#222" stroke-width="1.1" fill="#fff" stroke-linejoin="round"/>
<path d="M226.9 660.8 L228.2 666.1 L225 668.4 L220.4 665.4 L219 660.1 L222.3 657.8Z" stroke="#222" stroke-width="0.9" fill="#fff" stroke-linejoin="round"/>
<path d="M226.9 660.8 L230 658.6" stroke="#222" stroke-width="0.8" fill="none"/>
<path d="M228.2 666.1 L231.3 663.9" stroke="#222" stroke-width="0.8" fill="none"/>
<path d="M222.3 657.8 L225.4 655.6" stroke="#222" stroke-width="0.8" fill="none"/>
<path d="M222.1 645.4 L222.3 640.1 L226.1 638.7 L228.3 637.9 L231.9 641.8 L231.7 647.1 L227.9 648.5 L225.7 649.3Z" stroke="#222" stroke-width="1.1" fill="#fff" stroke-linejoin="round"/>
<path d="M229.6 642.7 L229.4 647.9 L225.7 649.3 L222.1 645.4 L222.3 640.1 L226.1 638.7Z" stroke="#222" stroke-width="0.9" fill="#fff" stroke-linejoin="round"/>
<path d="M229.6 642.7 L231.9 641.8" stroke="#222" stroke-width="0.8" fill="none"/>
<path d="M229.4 647.9 L231.7 647.1" stroke="#222" stroke-width="0.8" fill="none"/>
<path d="M226.1 638.7 L228.3 637.9" stroke="#222" stroke-width="0.8" fill="none"/>
<ellipse cx="225.9" cy="644" rx="2.4" ry="3.3" stroke="#222" stroke-width="0.9" fill="none" transform="rotate(-20 225.9 644)"/>
<ellipse cx="225.9" cy="644" rx="1.2" ry="1.7" stroke="#222" stroke-width="0.8" fill="#555" transform="rotate(-20 225.9 644)"/>
<path d="M216.1 628.2 L216.3 622.9 L220.1 621.5 L222.3 620.7 L225.9 624.6 L225.7 629.9 L221.9 631.3 L219.7 632.1Z" stroke="#222" stroke-width="1.1" fill="#fff" stroke-linejoin="round"/>
<path d="M223.6 625.5 L223.4 630.7 L219.7 632.1 L216.1 628.2 L216.3 622.9 L220.1 621.5Z" stroke="#222" stroke-width="0.9" fill="#fff" stroke-linejoin="round"/>
<path d="M223.6 625.5 L225.9 624.6" stroke="#222" stroke-width="0.8" fill="none"/>
<path d="M223.4 630.7 L225.7 629.9" stroke="#222" stroke-width="0.8" fill="none"/>
<path d="M220.1 621.5 L222.3 620.7" stroke="#222" stroke-width="0.8" fill="none"/>
<ellipse cx="219.9" cy="626.8" rx="2.4" ry="3.3" stroke="#222" stroke-width="0.9" fill="none" transform="rotate(-20 219.9 626.8)"/>
<ellipse cx="219.9" cy="626.8" rx="1.2" ry="1.7" stroke="#222" stroke-width="0.8" fill="#555" transform="rotate(-20 219.9 626.8)"/>
<path d="M211.1 651.5 L211.3 646.2 L215.1 644.8 L217.3 644 L220.9 647.9 L220.7 653.2 L216.9 654.6 L214.7 655.4Z" stroke="#222" stroke-width="1.1" fill="#fff" stroke-linejoin="round"/>
<path d="M218.6 648.8 L218.4 654 L214.7 655.4 L211.1 651.5 L211.3 646.2 L215.1 644.8Z" stroke="#222" stroke-width="0.9" fill="#fff" stroke-linejoin="round"/>
<path d="M218.6 648.8 L220.9 647.9" stroke="#222" stroke-width="0.8" fill="none"/>
<path d="M218.4 654 L220.7 653.2" stroke="#222" stroke-width="0.8" fill="none"/>
<path d="M215.1 644.8 L217.3 644" stroke="#222" stroke-width="0.8" fill="none"/>
<ellipse cx="214.9" cy="650.1" rx="2.4" ry="3.3" stroke="#222" stroke-width="0.9" fill="none" transform="rotate(-20 214.9 650.1)"/>
<ellipse cx="214.9" cy="650.1" rx="1.2" ry="1.7" stroke="#222" stroke-width="0.8" fill="#555" transform="rotate(-20 214.9 650.1)"/>
<path d="M146.600 556 L148.500 531 C149 527.500 151 526.500 154 527.8 L191.500 542.5 C194.500 543.700 195.500 545 195.800 548 L198 576 C198 580 197 582 194.500 584 L183.300 593 C178 594 172 592 168.600 589.5 L158 580 Z M152 541 C151 548 152 570 160 582 C166 588 176 589.500 185.700 587 C190 584 192.500 579 191.800 573.6 C191 564 188 556 183.300 551.6 C177 543 168 536.500 161.300 535.8 C156 535.500 153 537.500 152 541Z" stroke="#222" stroke-width="1.3" fill="url(#dots)" stroke-linejoin="round" stroke-linecap="round"/>
<path d="M152 541 C151 548 152 570 160 582 C166 588 176 589.5 185.7 587 C190 584 192.5 579 191.8 573.6 C191 564 188 556 183.3 551.6 C177 543 168 536.5 161.3 535.8 C156 535.5 153 537.5 152 541Z" fill="#fff" stroke="#222" stroke-width="1"/>
<ellipse cx="154.5" cy="532" rx="1.7" ry="2.4" stroke="#222" stroke-width="0.9" fill="#fff" transform="rotate(-10 154.5 532)"/>
<ellipse cx="190" cy="546.5" rx="1.9" ry="2.5" stroke="#222" stroke-width="0.9" fill="#fff" transform="rotate(-10 190 546.5)"/>
<ellipse cx="194" cy="577" rx="1.8" ry="2.6" stroke="#222" stroke-width="0.9" fill="#fff" transform="rotate(-10 194 577)"/>
<path d="M157 541 C165 543 176 552 181 563 C184 570 185 578 183 584" stroke="#555" stroke-width="0.6" fill="none" stroke-linejoin="round" stroke-linecap="round"/>
<path d="M148.500 553 C152 549.500 158 549.500 163 552.500 C171 557 176 566 176.500 574 C177 581 174 586 169.500 588.3 L163.500 586 L158 580 L152 578.500 L150 572 L151 564 L144 562.500 L149.500 559 Z" stroke="#222" stroke-width="1.3" fill="#fff" stroke-linejoin="round" stroke-linecap="round"/>
<path d="M148.500 553 L155.500 558 L160.500 555.500 M144 562.500 L152.500 560.500 M163 560.500 L167 558.500 L167.500 565 L163.500 567Z M163.500 586 L171.500 580 M158 580 L165 576.500 M166 554.500 C171 560 173.500 570 172 580" stroke="#333" stroke-width="0.8" fill="none" stroke-linejoin="round" stroke-linecap="round"/>
<ellipse cx="155.8" cy="571.2" rx="4.4" ry="5.6" stroke="#222" stroke-width="1" fill="none" transform="rotate(-15 155.8 571.2)"/>
<ellipse cx="155.8" cy="571.2" rx="2.6" ry="3.6" stroke="#222" stroke-width="0.8" fill="none" transform="rotate(-15 155.8 571.2)"/>
<ellipse cx="146" cy="575.4" rx="4.4" ry="6" stroke="#222" stroke-width="1.4" fill="#fff" transform="rotate(-20 146 575.4)"/>
<ellipse cx="146" cy="575.4" rx="2.6" ry="4" stroke="#222" stroke-width="0.8" fill="none" transform="rotate(-20 146 575.4)"/>
<ellipse cx="133.8" cy="583.4" rx="8" ry="9.8" stroke="#222" stroke-width="1.4" fill="#fff" transform="rotate(-20 133.8 583.4)"/>
<ellipse cx="132.6" cy="584" rx="5.2" ry="6.8" stroke="#222" stroke-width="0.9" fill="none" transform="rotate(-20 132.6 584)"/>
<ellipse cx="132.1" cy="584.3" rx="3.2" ry="4.6" stroke="#222" stroke-width="0.7" fill="none" transform="rotate(-20 132.1 584.3)"/>
<path d="M129 575.500 C133 573.500 139 575.500 142 581" stroke="#222" stroke-width="1.6" fill="none" stroke-linejoin="round" stroke-linecap="round"/>
<path d="M125 581.300 L104.9 592 L110 601.400 L129.200 590.8Z" stroke="#222" stroke-width="1.0" fill="#fff" stroke-linejoin="round" stroke-linecap="round"/>
<path d="M116 586 L120 595.500 M113 587.500 L117.500 597" stroke="#222" stroke-width="0.7" fill="none" stroke-linejoin="round" stroke-linecap="round"/>
<path d="M105.500 593 L97.500 597.500 L96 598.500 L99 604.500 L108.5 599.500Z" stroke="#222" stroke-width="1.0" fill="#fff" stroke-linejoin="round" stroke-linecap="round"/>
<path d="M101 595.500 L104 601.500" stroke="#222" stroke-width="0.7" fill="none" stroke-linejoin="round" stroke-linecap="round"/>
<ellipse cx="102.5" cy="598.5" rx="1.2" ry="1.6" stroke="#222" stroke-width="0.7" fill="none"/>
<path d="M96.400 599.500 L89.500 603.500 L92 608.500 L98.5 604.500Z" stroke="#222" stroke-width="0.9" fill="#999" stroke-linejoin="round" stroke-linecap="round"/>
<path d="M94.5 600.500 L96.500 605.500 M92.500 601.500 L94.500 606.500" stroke="#222" stroke-width="0.7" fill="none" stroke-linejoin="round" stroke-linecap="round"/>
<ellipse cx="85.7" cy="612" rx="4.8" ry="7.4" stroke="#222" stroke-width="1.5" fill="#fff" transform="rotate(-22 85.7 612)"/>
<ellipse cx="86.2" cy="612" rx="2.8" ry="5" stroke="#222" stroke-width="0.8" fill="none" transform="rotate(-22 86.2 612)"/>
<ellipse cx="76.4" cy="617.6" rx="4.6" ry="6.4" stroke="#222" stroke-width="1.4" fill="#fff" transform="rotate(-22 76.4 617.6)"/>
<ellipse cx="76.7" cy="617.6" rx="2.3" ry="3.2" stroke="#222" stroke-width="0.9" fill="none" transform="rotate(-22 76.7 617.6)"/>
<ellipse cx="68" cy="623.7" rx="7.2" ry="9.4" stroke="#222" stroke-width="1.4" fill="#fff" transform="rotate(-22 68 623.7)"/>
<ellipse cx="68.3" cy="623.7" rx="3.6" ry="4.7" stroke="#222" stroke-width="0.9" fill="none" transform="rotate(-22 68.3 623.7)"/>
<ellipse cx="68.2" cy="623.7" rx="5.4" ry="7.4" stroke="#222" stroke-width="0.6" fill="none" transform="rotate(-22 68.2 623.7)"/>
<ellipse cx="56" cy="631" rx="8.8" ry="10.4" stroke="#222" stroke-width="1.1" fill="#fff" transform="rotate(-22 56 631)"/>
<ellipse cx="55" cy="631.3" rx="6.2" ry="8" transform="rotate(-22 55 631.3)" fill="none" stroke="#222" stroke-width="2.6" stroke-dasharray="2 1.3"/>
<ellipse cx="54.5" cy="631.5" rx="3.8" ry="5.4" stroke="#222" stroke-width="1" fill="#fff" transform="rotate(-22 54.5 631.5)"/>
<ellipse cx="54" cy="631.8" rx="2.2" ry="3.4" stroke="#222" stroke-width="0.8" fill="none" transform="rotate(-22 54 631.8)"/>
<path d="M39.500 637.500 L48 633.500 L50 640 L42 644Z" stroke="#222" stroke-width="0.9" fill="#fff" stroke-linejoin="round" stroke-linecap="round"/>
<ellipse cx="33.5" cy="642.5" rx="8.4" ry="10" stroke="#222" stroke-width="1.1" fill="#fff" transform="rotate(-22 33.5 642.5)"/>
<ellipse cx="32.5" cy="642.8" rx="6" ry="7.8" transform="rotate(-22 32.5 642.8)" fill="none" stroke="#222" stroke-width="2.6" stroke-dasharray="2 1.3"/>
<ellipse cx="32" cy="643" rx="3.6" ry="5.2" stroke="#222" stroke-width="1" fill="#fff" transform="rotate(-22 32 643)"/>
<ellipse cx="31.5" cy="643.3" rx="2" ry="3.2" stroke="#222" stroke-width="0.8" fill="none" transform="rotate(-22 31.5 643.3)"/>
<ellipse cx="23" cy="650" rx="7.6" ry="10" stroke="#222" stroke-width="1.6" fill="#fff" transform="rotate(-22 23 650)"/>
<ellipse cx="23.5" cy="650" rx="5.6" ry="8" stroke="#222" stroke-width="0.8" fill="#fff" transform="rotate(-22 23.5 650)"/>
<path d="M28 645 L32 650" stroke="#fff" stroke-width="2.2" fill="none" stroke-linejoin="round" stroke-linecap="round"/>
<path d="M155 615 L169.500 605.7 C174 603.500 181 606 182 611 L182.200 624.7 C181 630 178 633 175.800 635.3 L176.5 641 L171 647.500 L165 644.500 L163.5 638 L152 632Z" stroke="#222" stroke-width="1.1" fill="#fff" stroke-linejoin="round" stroke-linecap="round"/>
<path d="M160 629 L166 626 L167 621 M163.500 638 L169.5 634.500 M165 644.500 C163 641 166 637 169.500 636" stroke="#444" stroke-width="0.7" fill="none" stroke-linejoin="round" stroke-linecap="round"/>
<ellipse cx="170.5" cy="642" rx="1.6" ry="2.4" stroke="#222" stroke-width="0.8" fill="none"/>
<path d="M95 634 C100 637 108 640.500 114.400 639.6 C120 639 128 633 135.600 626.9 C139 624.500 142 624 146 624.5 L153.500 636 C151 641 149 644 146.200 646.500 C140 652 134 655.500 127 656.5 C119 657.500 112 657.500 106 655.5 C100 653.500 95 651 91 646.500Z" stroke="#222" stroke-width="1.0" fill="url(#hose)" stroke-linejoin="round" stroke-linecap="round"/>
<path d="M96 634.500 C101 637.500 108 641 114.400 640.2 C120 639.500 128 634 135.600 627.5 C139 625 142 624.500 146 625" stroke="#222" stroke-width="2.2" fill="none" stroke-linejoin="round" stroke-linecap="round"/>
<path d="M91 648.500 C96 654 104 658 114 659.500 C126 660.500 140 656 150 645.500" stroke="#333" stroke-width="0.7" fill="none" stroke-linejoin="round" stroke-linecap="round"/>
<path d="M84.5 630 C86 624.500 93 621.500 99 623.500 L99.5 628 C95 630 92.500 635 93 641.500 L90 648 L86 646 C84 641 83.500 635 84.500 630Z" stroke="#222" stroke-width="1.3" fill="#fff" stroke-linejoin="round" stroke-linecap="round"/>
<path d="M86 630.500 L91.5 632.500 M87.500 626.500 L93 629.500 M92 623.500 L96 627 M86 640 L90 641" stroke="#222" stroke-width="0.9" fill="none" stroke-linejoin="round" stroke-linecap="round"/>
<ellipse cx="88.5" cy="636" rx="1.6" ry="2.6" stroke="#222" stroke-width="0.8" fill="none"/>
<path d="M132.500 616 C134 609.500 141 605.500 147 605.700 L153 607 L157.800 611.5 L157 618 L151 619 C146 620 142.500 624 142 631 L136 633.500 C132.500 629 131.500 622 132.500 616Z" stroke="#222" stroke-width="1.5" fill="#fff" stroke-linejoin="round" stroke-linecap="round"/>
<path d="M134.500 614 L140 618.500 M138 609.500 L143.500 614.500 M144 606.500 L147 612.500 M149.500 608 L151.500 613.500 M134 625.500 L139 626" stroke="#222" stroke-width="1.0" fill="none" stroke-linejoin="round" stroke-linecap="round"/>
<ellipse cx="148.5" cy="612" rx="2" ry="2.6" stroke="#222" stroke-width="0.9" fill="none"/>
<ellipse cx="154.5" cy="614" rx="1.4" ry="2" stroke="#222" stroke-width="0.8" fill="none"/>
<path d="M142.500 622 C146 619 152 620 154.500 624.500 C156 628 155.500 632 153.500 636" stroke="#222" stroke-width="1.3" fill="none" stroke-linejoin="round" stroke-linecap="round"/>
<path d="M146 624 C150 623.500 152.500 627 152 631" stroke="#222" stroke-width="0.7" fill="none" stroke-linejoin="round" stroke-linecap="round"/>
<path d="M163.5 619.5 L170 621.5" stroke="#222" stroke-width="0.7" fill="none"/>
<path d="M166.5 615 L167.5 621" stroke="#222" stroke-width="0.7" fill="none"/>
<path d="M175.8 603.3 L207.8 619.3 A2.6 2.6 0 0 0 210.2 614.7 L178.2 598.7 A2.6 2.6 0 0 0 175.8 603.3Z" stroke="#222" stroke-width="0.9" fill="#fff" stroke-linejoin="round" stroke-linecap="round"/>
<path d="M177.4 603.6 L180 600.1" stroke="#222" stroke-width="0.8" fill="none"/>
<path d="M178.5 604.2 L181.2 600.6" stroke="#222" stroke-width="0.8" fill="none"/>
<path d="M179.7 604.8 L182.4 601.2" stroke="#222" stroke-width="0.8" fill="none"/>
<path d="M180.8 605.4 L183.5 601.8" stroke="#222" stroke-width="0.8" fill="none"/>
<path d="M182 606 L184.7 602.4" stroke="#222" stroke-width="0.8" fill="none"/>
<path d="M183.2 606.6 L185.9 603" stroke="#222" stroke-width="0.8" fill="none"/>
<path d="M184.3 607.1 L187 603.5" stroke="#222" stroke-width="0.8" fill="none"/>
<path d="M185.5 607.7 L188.2 604.1" stroke="#222" stroke-width="0.8" fill="none"/>
<path d="M186.7 608.3 L189.3 604.7" stroke="#222" stroke-width="0.8" fill="none"/>
<path d="M187.8 608.9 L190.5 605.3" stroke="#222" stroke-width="0.8" fill="none"/>
<path d="M189 609.5 L191.7 605.9" stroke="#222" stroke-width="0.8" fill="none"/>
<path d="M190.1 610 L192.8 606.4" stroke="#222" stroke-width="0.8" fill="none"/>
<path d="M174 598.500 L176.500 600 L176 603.500 L173.500 602" stroke="#555" stroke-width="0.6" fill="none" stroke-linejoin="round" stroke-linecap="round"/>
<path d="M205.5 621.8 L205.7 615.6 L210.1 614 L212.3 613.2 L216.5 617.8 L216.3 624 L211.9 625.6 L209.7 626.4Z" stroke="#222" stroke-width="1.1" fill="#fff" stroke-linejoin="round"/>
<path d="M214.2 618.6 L214 624.8 L209.7 626.4 L205.5 621.8 L205.7 615.6 L210.1 614Z" stroke="#222" stroke-width="0.9" fill="#fff" stroke-linejoin="round"/>
<path d="M214.2 618.6 L216.5 617.8" stroke="#222" stroke-width="0.8" fill="none"/>
<path d="M214 624.8 L216.3 624" stroke="#222" stroke-width="0.8" fill="none"/>
<path d="M210.1 614 L212.3 613.2" stroke="#222" stroke-width="0.8" fill="none"/>
<ellipse cx="209.9" cy="620.2" rx="2.8" ry="3.8" stroke="#222" stroke-width="0.9" fill="none" transform="rotate(-20 209.9 620.2)"/>
<ellipse cx="209.9" cy="620.2" rx="1.5" ry="2" stroke="#222" stroke-width="0.8" fill="#555" transform="rotate(-20 209.9 620.2)"/>
<path d="M207.3 638.7 L187.3 628.8 L184.7 634.2 L204.7 644.1Z" stroke="#222" stroke-width="0.9" fill="#fff" stroke-linejoin="round"/>
<path d="M197.3 633.8 L194 638.8" stroke="#1a1a1a" stroke-width="0.85" fill="none"/>
<path d="M196.3 633.2 L193 638.3" stroke="#1a1a1a" stroke-width="0.85" fill="none"/>
<path d="M195.2 632.7 L191.9 637.8" stroke="#1a1a1a" stroke-width="0.85" fill="none"/>
<path d="M194.1 632.2 L190.8 637.2" stroke="#1a1a1a" stroke-width="0.85" fill="none"/>
<path d="M193 631.6 L189.7 636.7" stroke="#1a1a1a" stroke-width="0.85" fill="none"/>
<path d="M192 631.1 L188.7 636.2" stroke="#1a1a1a" stroke-width="0.85" fill="none"/>
<path d="M190.9 630.6 L187.6 635.6" stroke="#1a1a1a" stroke-width="0.85" fill="none"/>
<path d="M189.8 630 L186.5 635.1" stroke="#1a1a1a" stroke-width="0.85" fill="none"/>
<path d="M188.7 629.5 L185.4 634.6" stroke="#1a1a1a" stroke-width="0.85" fill="none"/>
<path d="M200.4 644.5 L200.9 638.9 L205.1 635.1 L208.8 636.9 L212.2 638.6 L211.8 644.3 L207.6 648.1 L203.8 646.2Z" stroke="#222" stroke-width="1.1" fill="#fff" stroke-linejoin="round"/>
<path d="M204.3 640.6 L208.5 636.8 L212.2 638.6 L211.8 644.3 L207.6 648.1 L203.8 646.2Z" stroke="#222" stroke-width="0.9" fill="#fff" stroke-linejoin="round"/>
<path d="M204.3 640.6 L200.9 638.9" stroke="#222" stroke-width="0.8" fill="none"/>
<path d="M208.5 636.8 L205.1 635.1" stroke="#222" stroke-width="0.8" fill="none"/>
<path d="M203.8 646.2 L200.4 644.5" stroke="#222" stroke-width="0.8" fill="none"/>
<ellipse cx="187" cy="630.8" rx="3.8" ry="5" stroke="#222" stroke-width="1.4" fill="#fff" transform="rotate(-20 187 630.8)"/>
<ellipse cx="187.3" cy="630.8" rx="1.9" ry="2.5" stroke="#222" stroke-width="0.9" fill="none" transform="rotate(-20 187.3 630.8)"/>
<path d="M209.8 658.6 L185.4 645.2 L182.6 650.4 L207 663.8Z" stroke="#222" stroke-width="0.9" fill="#fff" stroke-linejoin="round"/>
<path d="M195.2 650.5 L191.7 655.5" stroke="#1a1a1a" stroke-width="0.85" fill="none"/>
<path d="M194.2 650 L190.7 654.9" stroke="#1a1a1a" stroke-width="0.85" fill="none"/>
<path d="M193.1 649.4 L189.6 654.3" stroke="#1a1a1a" stroke-width="0.85" fill="none"/>
<path d="M192 648.8 L188.5 653.7" stroke="#1a1a1a" stroke-width="0.85" fill="none"/>
<path d="M191 648.2 L187.5 653.1" stroke="#1a1a1a" stroke-width="0.85" fill="none"/>
<path d="M189.9 647.6 L186.4 652.6" stroke="#1a1a1a" stroke-width="0.85" fill="none"/>
<path d="M188.9 647.1 L185.4 652" stroke="#1a1a1a" stroke-width="0.85" fill="none"/>
<path d="M187.8 646.5 L184.3 651.4" stroke="#1a1a1a" stroke-width="0.85" fill="none"/>
<path d="M186.8 645.9 L183.3 650.8" stroke="#1a1a1a" stroke-width="0.85" fill="none"/>
<path d="M202.4 664.3 L203.2 658.3 L207.8 654.5 L211.2 656.3 L215 658.4 L214.3 664.4 L209.6 668.3 L206.3 666.5Z" stroke="#222" stroke-width="1.1" fill="#fff" stroke-linejoin="round"/>
<path d="M206.5 660.2 L211.2 656.3 L215 658.4 L214.3 664.4 L209.6 668.3 L205.8 666.2Z" stroke="#222" stroke-width="0.9" fill="#fff" stroke-linejoin="round"/>
<path d="M206.5 660.2 L203.2 658.3" stroke="#222" stroke-width="0.8" fill="none"/>
<path d="M211.2 656.3 L207.8 654.5" stroke="#222" stroke-width="0.8" fill="none"/>
<path d="M205.8 666.2 L202.4 664.3" stroke="#222" stroke-width="0.8" fill="none"/>
<ellipse cx="178.7" cy="645.3" rx="4.2" ry="5.4" stroke="#222" stroke-width="1.4" fill="#fff" transform="rotate(-20 178.7 645.3)"/>
<ellipse cx="179" cy="645.3" rx="2.1" ry="2.7" stroke="#222" stroke-width="0.9" fill="none" transform="rotate(-20 179 645.3)"/>
<path d="M74 266.5 L80 271.2" stroke="#222" stroke-width="0.9" fill="none"/>
<path d="M24 294 L28 302" stroke="#222" stroke-width="0.9" fill="none"/>
<path d="M11 302 L14 310" stroke="#222" stroke-width="0.9" fill="none"/>
<path d="M47 316 L55 321" stroke="#222" stroke-width="0.9" fill="none"/>
<path d="M36 320 L40 325" stroke="#222" stroke-width="0.9" fill="none"/>
<path d="M54 286 L50 292" stroke="#222" stroke-width="0.9" fill="none"/>
<path d="M67 292 L62 298" stroke="#222" stroke-width="0.9" fill="none"/>
<path d="M8 331 L14 338" stroke="#222" stroke-width="0.9" fill="none"/>
<path d="M22 328 L28 331" stroke="#222" stroke-width="0.9" fill="none"/>
<path d="M29 349 L37 352" stroke="#222" stroke-width="0.9" fill="none"/>
<path d="M30 357 L40 362" stroke="#222" stroke-width="0.9" fill="none"/>
<path d="M57 351 L62 357" stroke="#222" stroke-width="0.9" fill="none"/>
<path d="M71 349 L77 352" stroke="#222" stroke-width="0.9" fill="none"/>
<path d="M96 364 L94 363" stroke="#222" stroke-width="0.9" fill="none"/>
<path d="M66 377 L70 374" stroke="#222" stroke-width="0.9" fill="none"/>
<path d="M103 385 L95 379" stroke="#222" stroke-width="0.9" fill="none"/>
<path d="M93 390 L85 384" stroke="#222" stroke-width="0.9" fill="none"/>
<path d="M9 378 L13 373" stroke="#222" stroke-width="0.9" fill="none"/>
<path d="M12 388 L14 393" stroke="#222" stroke-width="0.9" fill="none"/>
<path d="M11 415 L14 410" stroke="#222" stroke-width="0.9" fill="none"/>
<path d="M43 394 L44 386" stroke="#222" stroke-width="0.9" fill="none"/>
<path d="M138.5 373 L137.5 351" stroke="#222" stroke-width="0.9" fill="none"/>
<path d="M121.5 380 L118 366.6" stroke="#222" stroke-width="0.9" fill="none"/>
<path d="M216.6 338 L211.6 325" stroke="#222" stroke-width="0.9" fill="none"/>
<path d="M230.4 329.8 L220 320" stroke="#222" stroke-width="0.9" fill="none"/>
<path d="M242.5 323 L229 316" stroke="#222" stroke-width="0.9" fill="none"/>
<path d="M180 362 L177 366" stroke="#222" stroke-width="0.9" fill="none"/>
<path d="M242 262 L248 272" stroke="#222" stroke-width="0.9" fill="none"/>
<path d="M280 292 L286 302" stroke="#222" stroke-width="0.9" fill="none"/>
<path d="M268 298 L274 309" stroke="#222" stroke-width="0.9" fill="none"/>
<path d="M283 355 L287.6 361" stroke="#222" stroke-width="0.9" fill="none"/>
<path d="M270 361.7 L283 379.8" stroke="#222" stroke-width="0.9" fill="none"/>
<path d="M260 367.7 L269.5 382" stroke="#222" stroke-width="0.9" fill="none"/>
<path d="M60.4 540 L60.4 523.4" stroke="#222" stroke-width="0.9" fill="none"/>
<path d="M47.2 544 L38 525.5" stroke="#222" stroke-width="0.9" fill="none"/>
<path d="M38.5 549.7 L29 530.5" stroke="#222" stroke-width="0.9" fill="none"/>
<path d="M26.4 553.6 L19.8 537" stroke="#222" stroke-width="0.9" fill="none"/>
<path d="M97.3 515 L92.3 501.4" stroke="#222" stroke-width="0.9" fill="none"/>
<path d="M110.4 510 L104.4 495.9" stroke="#222" stroke-width="0.9" fill="none"/>
<path d="M161.6 480.5 L152 466" stroke="#222" stroke-width="0.9" fill="none"/>
<path d="M154 486 L143 471" stroke="#222" stroke-width="0.9" fill="none"/>
<path d="M143 491.5 L133 476" stroke="#222" stroke-width="0.9" fill="none"/>
<path d="M133.6 498 L122 482.7" stroke="#222" stroke-width="0.9" fill="none"/>
<path d="M121.5 503 L108 483" stroke="#222" stroke-width="0.9" fill="none"/>
<path d="M187 505 L193.5 503.5" stroke="#222" stroke-width="0.9" fill="none"/>
<path d="M213.3 521.7 L211.6 516.8" stroke="#222" stroke-width="0.9" fill="none"/>
<path d="M224.3 516.8 L221.5 511.8" stroke="#222" stroke-width="0.9" fill="none"/>
<path d="M222 483 L220 487" stroke="#222" stroke-width="0.9" fill="none"/>
<path d="M303 436.8 L301.3 438.4" stroke="#222" stroke-width="0.9" fill="none"/>
<path d="M313.4 437.3 L304.6 440.6" stroke="#222" stroke-width="0.9" fill="none"/>
<path d="M276 453.7 L279 453.7" stroke="#222" stroke-width="0.9" fill="none"/>
<path d="M304.6 465.3 L308 468.6" stroke="#222" stroke-width="0.9" fill="none"/>
<path d="M316.7 459.8 L320.5 465.3" stroke="#222" stroke-width="0.9" fill="none"/>
<path d="M289.4 546.4 L289.4 537" stroke="#222" stroke-width="0.9" fill="none"/>
<path d="M305.7 544.2 L305.7 524.5" stroke="#222" stroke-width="0.9" fill="none"/>
<path d="M269.5 548.6 L265.6 541" stroke="#222" stroke-width="0.9" fill="none"/>
<path d="M240.9 554 L239.2 546.4" stroke="#222" stroke-width="0.9" fill="none"/>
<path d="M218.8 567 L221 558.3" stroke="#222" stroke-width="0.9" fill="none"/>
<path d="M283 568 L290.3 579.7" stroke="#222" stroke-width="0.9" fill="none"/>
<path d="M302.4 597.3 L299 604" stroke="#222" stroke-width="0.9" fill="none"/>
<path d="M296 662 L290.3 658.5" stroke="#222" stroke-width="0.9" fill="none"/>
<path d="M195.7 596.8 L191.3 602.3" stroke="#222" stroke-width="0.9" fill="none"/>
<path d="M207.8 603.4 L207.8 611" stroke="#222" stroke-width="0.9" fill="none"/>
<path d="M218.2 600.6 L213.3 613.2" stroke="#222" stroke-width="0.9" fill="none"/>
<path d="M148.5 602.3 L148.5 607.7" stroke="#222" stroke-width="0.9" fill="none"/>
<path d="M161 602.3 L161 607.7" stroke="#222" stroke-width="0.9" fill="none"/>
<path d="M188.6 621 L188.6 626.4" stroke="#222" stroke-width="0.9" fill="none"/>
<path d="M200 629.2 L196.8 634" stroke="#222" stroke-width="0.9" fill="none"/>
<path d="M224.3 612 L229.2 618.7" stroke="#222" stroke-width="0.9" fill="none"/>
<path d="M173 653 L175.4 650" stroke="#222" stroke-width="0.9" fill="none"/>
<path d="M185.8 658.5 L188.6 654" stroke="#222" stroke-width="0.9" fill="none"/>
<path d="M155 643.6 L153.4 639.2" stroke="#222" stroke-width="0.9" fill="none"/>
<path d="M141.9 650.8 L139.7 647.5" stroke="#222" stroke-width="0.9" fill="none"/>
<path d="M217.7 640.3 L217.7 644.7" stroke="#222" stroke-width="0.9" fill="none"/>
<path d="M249 653 L255 658" stroke="#222" stroke-width="0.9" fill="none"/>
<path d="M236.5 659 L239 662.3" stroke="#222" stroke-width="0.9" fill="none"/>
<path d="M90 652 L92 645" stroke="#222" stroke-width="0.9" fill="none"/>
<rect x="61" y="257" width="13" height="10" fill="#ffff00"/>
<text x="67.5" y="265" class="n" font-size="8.3">39</text>
<rect x="22" y="284" width="12" height="10" fill="#ffff00"/>
<text x="28" y="292" class="n" font-size="8.3">41</text>
<rect x="4" y="291" width="14" height="11" fill="#ffff00"/>
<text x="11" y="299.5" class="n" font-size="8.3">40</text>
<rect x="41" y="305" width="13" height="11" fill="#ffff00"/>
<text x="47.5" y="313.5" class="n" font-size="8.3">49</text>
<rect x="27" y="311" width="13" height="9" fill="#ffff00"/>
<text x="33.5" y="318.5" class="n" font-size="8.3">48</text>
<rect x="2" y="322" width="13" height="9" fill="#ffff00"/>
<text x="8.5" y="329.5" class="n" font-size="8.3">50</text>
<rect x="15" y="318" width="10" height="10" fill="#ffff00"/>
<text x="20" y="326" class="n" font-size="8.3">81</text>
<rect x="53" y="342" width="11" height="9" fill="#ffff00"/>
<text x="58.5" y="349.5" class="n" font-size="8.3">42</text>
<rect x="63" y="340" width="12" height="9" fill="#ffff00"/>
<text x="69" y="347.5" class="n" font-size="8.3">43</text>
<rect x="97" y="359" width="13" height="10" fill="#ffff00"/>
<text x="103.5" y="367" class="n" font-size="8.3">45</text>
<rect x="53" y="372" width="13" height="10" fill="#ffff00"/>
<text x="59.5" y="380" class="n" font-size="8.3">44</text>
<rect x="103" y="382" width="13" height="10" fill="#ffff00"/>
<text x="109.5" y="390" class="n" font-size="8.3">47</text>
<rect x="92" y="388" width="13" height="10" fill="#ffff00"/>
<text x="98.5" y="396" class="n" font-size="8.3">46</text>
<rect x="132" y="373" width="13" height="10" fill="#ffff00"/>
<text x="138.5" y="381" class="n" font-size="8.3">35</text>
<rect x="116" y="380" width="13" height="10" fill="#ffff00"/>
<text x="122.5" y="388" class="n" font-size="8.3">34</text>
<rect x="176" y="351" width="13" height="11" fill="#ffff00"/>
<text x="182.5" y="359.5" class="n" font-size="8.3">36</text>
<rect x="213" y="338" width="13" height="10" fill="#ffff00"/>
<text x="219.5" y="346" class="n" font-size="8.3">56</text>
<rect x="228" y="330" width="13" height="11" fill="#ffff00"/>
<text x="234.5" y="338.5" class="n" font-size="8.3">55</text>
<rect x="54" y="540" width="13" height="10" fill="#ffff00"/>
<text x="60.5" y="548" class="n" font-size="8.3">13</text>
<rect x="73" y="540" width="13" height="10" fill="#ffff00"/>
<text x="79.5" y="548" class="n" font-size="8.3">33</text>
<rect x="44" y="545" width="12" height="11" fill="#ffff00"/>
<text x="50" y="553.5" class="n" font-size="8.3">16</text>
<rect x="34" y="551" width="12" height="10" fill="#ffff00"/>
<text x="40" y="559" class="n" font-size="8.3">17</text>
<rect x="22" y="555" width="13" height="11" fill="#ffff00"/>
<text x="28.5" y="563.5" class="n" font-size="8.3">15</text>
<rect x="174" y="502" width="13" height="11" fill="#ffff00"/>
<text x="180.5" y="510.5" class="n" font-size="8.3">24</text>
<rect x="209" y="522" width="13" height="10" fill="#ffff00"/>
<text x="215.5" y="530" class="n" font-size="8.3">22</text>
<rect x="220" y="517" width="13" height="10" fill="#ffff00"/>
<text x="226.5" y="525" class="n" font-size="8.3">23</text>
<rect x="219" y="473" width="13" height="10" fill="#ffff00"/>
<text x="225.5" y="481" class="n" font-size="8.3">25</text>
<rect x="303" y="427" width="11" height="11" fill="#ffff00"/>
<text x="308.5" y="435.5" class="n" font-size="8.3">61</text>
<rect x="264" y="550" width="14" height="10" fill="#ffff00"/>
<text x="271" y="558" class="n" font-size="8.3">20</text>
<rect x="234" y="555" width="13" height="11" fill="#ffff00"/>
<text x="240.5" y="563.5" class="n" font-size="8.3">27</text>
<rect x="276" y="558" width="12" height="10" fill="#ffff00"/>
<text x="282" y="566" class="n" font-size="8.3">30</text>
<rect x="209" y="568" width="13" height="10" fill="#ffff00"/>
<text x="215.5" y="576" class="n" font-size="8.3">26</text>
<rect x="300" y="587" width="13" height="10" fill="#ffff00"/>
<text x="306.5" y="595" class="n" font-size="8.3">29</text>
<rect x="216" y="602" width="13" height="10" fill="#ffff00"/>
<text x="222.5" y="610" class="n" font-size="8.3">32</text>
<rect x="204" y="626" width="11" height="9" fill="#ffff00"/>
<text x="209.5" y="633.5" class="n" font-size="8.3">31</text>
<rect x="212" y="632" width="12" height="9" fill="#ffff00"/>
<text x="218" y="639.5" class="n" font-size="8.3">64</text>
<rect x="226" y="625" width="13" height="10" fill="#ffff00"/>
<text x="232.5" y="633" class="n" font-size="8.3">65</text>
<rect x="296" y="659" width="13" height="10" fill="#ffff00"/>
<text x="302.5" y="667" class="n" font-size="8.3">28</text>
<rect x="204" y="336" width="7" height="11" fill="#00e000"/>
<text x="207.5" y="344.5" class="n" font-size="8.3">1</text>
<rect x="37" y="406" width="12" height="11" fill="#00e000"/>
<text x="43" y="414.5" class="n" font-size="8.3">51</text>
<rect x="263" y="449" width="13" height="10" fill="#f06464"/>
<text x="269.5" y="457" class="n" font-size="8.3">60</text>
<text x="62" y="285" class="n" font-size="8.3" fill="#333">37</text>
<text x="73" y="291" class="n" font-size="8.3" fill="#333">38</text>
<text x="25.8" y="351" class="n" font-size="8.3" fill="#333">53</text>
<text x="26" y="359.5" class="n" font-size="8.3" fill="#333">52</text>
<text x="8" y="381" class="n" font-size="8.3" fill="#333">8</text>
<text x="9" y="390" class="n" font-size="8.3" fill="#333">83</text>
<text x="44" y="401" class="n" font-size="8.3" fill="#333">53</text>
<text x="19.2" y="433" class="n" font-size="8.3" fill="#333">82</text>
<text x="9.7" y="420.5" class="n" font-size="8.3" fill="#333">84</text>
<text x="102.7" y="434.8" class="n" font-size="8.3" fill="#333">14</text>
<text x="206" y="392" class="n" font-size="8.3" fill="#333">2</text>
<text x="228.8" y="384" class="n" font-size="8.3" fill="#333">3</text>
<text x="280" y="353" class="n" font-size="8.3" fill="#333">12</text>
<text x="267" y="358.7" class="n" font-size="8.3" fill="#333">11</text>
<text x="257.4" y="365.8" class="n" font-size="8.3" fill="#333">10</text>
<text x="249.7" y="330.6" class="n" font-size="8.3" fill="#333">59</text>
<text x="240" y="259" class="n" font-size="8.3" fill="#333">68</text>
<text x="290.3" y="310.7" class="n" font-size="8.3" fill="#333">57</text>
<text x="277.7" y="317.7" class="n" font-size="8.3" fill="#333">58</text>
<text x="134.7" y="414.5" class="n" font-size="8.3" fill="#333">18</text>
<text x="100" y="524" class="n" font-size="8.3" fill="#333">6</text>
<text x="112" y="517.5" class="n" font-size="8.3" fill="#333">4</text>
<text x="165" y="490.6" class="n" font-size="8.3" fill="#333">9</text>
<text x="156.7" y="494.5" class="n" font-size="8.3" fill="#333">8</text>
<text x="145.7" y="501" class="n" font-size="8.3" fill="#333">7</text>
<text x="136.4" y="506.6" class="n" font-size="8.3" fill="#333">4</text>
<text x="124.8" y="511.5" class="n" font-size="8.3" fill="#333">5</text>
<text x="312.9" y="475.5" class="n" font-size="8.3" fill="#333">62</text>
<text x="323.3" y="473.8" class="n" font-size="8.3" fill="#333">63</text>
<text x="289" y="555" class="n" font-size="8.3" fill="#333">19</text>
<text x="306" y="553.3" class="n" font-size="8.3" fill="#333">21</text>
<text x="199" y="596" class="n" font-size="8.3" fill="#333">73</text>
<text x="208.4" y="601.4" class="n" font-size="8.3" fill="#333">75</text>
<text x="218.8" y="598" class="n" font-size="8.3" fill="#333">74</text>
<text x="148.5" y="601.4" class="n" font-size="8.3" fill="#333">70</text>
<text x="161" y="601.4" class="n" font-size="8.3" fill="#333">69</text>
<text x="189" y="620" class="n" font-size="8.3" fill="#333">80</text>
<text x="200" y="628.3" class="n" font-size="8.3" fill="#333">79</text>
<text x="63.2" y="655" class="n" font-size="8.3" fill="#333">76</text>
<text x="86.3" y="661" class="n" font-size="8.3" fill="#333">78</text>
<text x="155.6" y="653" class="n" font-size="8.3" fill="#333">78</text>
<text x="144.6" y="660.4" class="n" font-size="8.3" fill="#333">77</text>
<text x="168.8" y="661" class="n" font-size="8.3" fill="#333">72</text>
<text x="181.4" y="667" class="n" font-size="8.3" fill="#333">71</text>
<text x="260.7" y="664.8" class="n" font-size="8.3" fill="#333">67</text>
<text x="243" y="669" class="n" font-size="8.3" fill="#333">66</text>
</svg>
<div id="grid">
<div class="hd" style="left:356px;width:79px"><svg class="ic" style="left:27px;top:1px" width="20" height="18" viewBox="0 0 20 18"><use href="#i-find"/></svg></div>
<div class="hd" style="left:436px;width:83px"><span>Symbol(s)</span></div>
<div class="hd" style="left:520px;width:34px"><span>Item</span></div>
<div class="hd" style="left:555px;width:83px"><span>Parts No.</span></div>
<div class="hd" style="left:639px;width:34px"><span>Qty.</span></div>
<div class="hd" style="left:674px;width:83px"><span>Latest Part No.</span></div>
<div class="hd" style="left:758px;width:129px"><span>Description</span></div>
<div class="hd" style="left:888px;width:69px"><span>Cut Out</span></div>
<div class="hd" style="left:958px;width:69px"><span>Cut In</span></div>
<div class="hd" style="left:1028px;width:105px"><span>Comment</span></div>
<div class="row" style="top:41px"><svg class="ic" style="left:5px;top:1px" width="16" height="16" viewBox="0 0 16 16"><use href="#i-gear2"/></svg><svg class="ic" style="left:21px;top:1px" width="18" height="16" viewBox="0 0 18 16"><use href="#i-cart"/></svg><span class="cb" style="left:40px"><b class="s">S</b></span><span class="cb" style="left:58px"><b class="i">i</b></span><svg class="ic" style="left:84px;top:0px" width="16" height="16" viewBox="0 0 16 16"><use href="#i-x"/></svg><span class="t" style="left:168px">1</span><span class="t" style="left:203px">U5MW0062</span><span class="t" style="left:287px">1</span><span class="t" style="left:322px">U5MW0088</span><span class="t d" style="left:406px">WATER PUMP</span></div>
<div class="row" style="top:61px"><svg class="ic" style="left:5px;top:0.5px" width="16" height="16" viewBox="0 0 16 16"><use href="#i-gear"/></svg><svg class="ic" style="left:21px;top:1px" width="18" height="16" viewBox="0 0 18 16"><use href="#i-cart"/></svg><span class="cb" style="left:40px"><b class="i">i</b></span><svg class="ic" style="left:84px;top:0px" width="18" height="18" viewBox="0 0 18 18"><use href="#i-bub"/></svg><span class="t" style="left:168px">13</span><span class="t" style="left:203px">31146702</span><span class="t" style="left:287px">1</span><span class="t" style="left:322px">31146702</span><span class="t d" style="left:406px">WATER PUMP PULLEY</span></div>
<div class="row" style="top:81px"><svg class="ic" style="left:5px;top:0.5px" width="16" height="16" viewBox="0 0 16 16"><use href="#i-gear"/></svg><svg class="ic" style="left:21px;top:1px" width="18" height="16" viewBox="0 0 18 16"><use href="#i-cart"/></svg><span class="cb" style="left:40px"><b class="i">i</b></span><span class="t" style="left:168px">15</span><span class="t" style="left:203px">0576005</span><span class="t" style="left:287px">1</span><span class="t" style="left:322px">0576005</span><span class="t d" style="left:406px">NUT</span></div>
<div class="row" style="top:101px"><svg class="ic" style="left:5px;top:0.5px" width="16" height="16" viewBox="0 0 16 16"><use href="#i-gear"/></svg><svg class="ic" style="left:21px;top:1px" width="18" height="16" viewBox="0 0 18 16"><use href="#i-cart"/></svg><span class="cb" style="left:40px"><b class="i">i</b></span><span class="t" style="left:168px">16</span><span class="t" style="left:203px">0920007</span><span class="t" style="left:287px">1</span><span class="t" style="left:322px">0920007</span><span class="t d" style="left:406px">WASHER</span></div>
<div class="row" style="top:121px"><svg class="ic" style="left:5px;top:0.5px" width="16" height="16" viewBox="0 0 16 16"><use href="#i-gear"/></svg><svg class="ic" style="left:21px;top:1px" width="18" height="16" viewBox="0 0 18 16"><use href="#i-cart"/></svg><span class="cb" style="left:40px"><b class="i">i</b></span><span class="t" style="left:168px">17</span><span class="t" style="left:203px">0920056</span><span class="t" style="left:287px">1</span><span class="t" style="left:322px">0920056</span><span class="t d" style="left:406px">WASHER</span></div>
<div class="row" style="top:141px"><svg class="ic" style="left:5px;top:0.5px" width="16" height="16" viewBox="0 0 16 16"><use href="#i-gear"/></svg><svg class="ic" style="left:21px;top:1px" width="18" height="16" viewBox="0 0 18 16"><use href="#i-cart"/></svg><span class="cb" style="left:40px"><b class="s">S</b></span><span class="cb" style="left:58px"><b class="i">i</b></span><svg class="ic" style="left:84px;top:0px" width="16" height="16" viewBox="0 0 16 16"><use href="#i-x"/></svg><svg class="ic" style="left:100px;top:0px" width="18" height="18" viewBox="0 0 18 18"><use href="#i-bub"/></svg><span class="t" style="left:168px">20</span><span class="t" style="left:203px">3687M009</span><span class="t" style="left:287px">1</span><span class="t" style="left:322px">3687M016</span><span class="t d" style="left:406px">JOINT</span></div>
<div class="row" style="top:161px"><svg class="ic" style="left:5px;top:0.5px" width="16" height="16" viewBox="0 0 16 16"><use href="#i-gear"/></svg><svg class="ic" style="left:21px;top:1px" width="18" height="16" viewBox="0 0 18 16"><use href="#i-cart"/></svg><span class="cb" style="left:40px"><b class="i">i</b></span><span class="t" style="left:168px">22</span><span class="t" style="left:203px">0576051</span><span class="t" style="left:287px">4</span><span class="t" style="left:322px">0576051</span><span class="t d" style="left:406px">NUT</span></div>
<div class="row" style="top:181px"><svg class="ic" style="left:5px;top:0.5px" width="16" height="16" viewBox="0 0 16 16"><use href="#i-gear"/></svg><svg class="ic" style="left:21px;top:1px" width="18" height="16" viewBox="0 0 18 16"><use href="#i-cart"/></svg><span class="cb" style="left:40px"><b class="i">i</b></span><span class="t" style="left:168px">23</span><span class="t" style="left:203px">0920054</span><span class="t" style="left:287px">4</span><span class="t" style="left:322px">0920054</span><span class="t d" style="left:406px">WASHER</span></div>
<div class="row" style="top:201px"><svg class="ic" style="left:5px;top:0.5px" width="16" height="16" viewBox="0 0 16 16"><use href="#i-gear"/></svg><svg class="ic" style="left:21px;top:1px" width="18" height="16" viewBox="0 0 18 16"><use href="#i-cart"/></svg><span class="cb" style="left:40px"><b class="i">i</b></span><span class="t" style="left:168px">24</span><span class="t" style="left:203px">0748525</span><span class="t" style="left:287px">2</span><span class="t" style="left:322px">0748525</span><span class="t d" style="left:406px">SCREW</span></div>
<div class="row" style="top:221px"><svg class="ic" style="left:5px;top:0.5px" width="16" height="16" viewBox="0 0 16 16"><use href="#i-gear"/></svg><svg class="ic" style="left:21px;top:1px" width="18" height="16" viewBox="0 0 18 16"><use href="#i-cart"/></svg><span class="cb" style="left:40px"><b class="i">i</b></span><span class="t" style="left:168px">25</span><span class="t" style="left:203px">0920054</span><span class="t" style="left:287px">2</span><span class="t" style="left:322px">0920054</span><span class="t d" style="left:406px">WASHER</span></div>
<div class="row" style="top:241px"><svg class="ic" style="left:5px;top:0.5px" width="16" height="16" viewBox="0 0 16 16"><use href="#i-gear"/></svg><svg class="ic" style="left:21px;top:1px" width="18" height="16" viewBox="0 0 18 16"><use href="#i-cart"/></svg><span class="cb" style="left:40px"><b class="i">i</b></span><svg class="ic" style="left:84px;top:0px" width="16" height="16" viewBox="0 0 16 16"><use href="#i-x"/></svg><span class="t" style="left:168px">26</span><span class="t" style="left:203px">2233304</span><span class="t" style="left:287px">2</span><span class="t" style="left:322px">2233304</span><span class="t d" style="left:406px">SCREW</span></div>
<div class="row" style="top:261px"><svg class="ic" style="left:5px;top:0.5px" width="16" height="16" viewBox="0 0 16 16"><use href="#i-gear"/></svg><svg class="ic" style="left:21px;top:1px" width="18" height="16" viewBox="0 0 18 16"><use href="#i-cart"/></svg><span class="cb" style="left:40px"><b class="i">i</b></span><span class="t" style="left:168px">27</span><span class="t" style="left:203px">0920054</span><span class="t" style="left:287px">2</span><span class="t" style="left:322px">0920054</span><span class="t d" style="left:406px">WASHER</span></div>
<div class="row" style="top:281px"><svg class="ic" style="left:5px;top:0.5px" width="16" height="16" viewBox="0 0 16 16"><use href="#i-gear"/></svg><svg class="ic" style="left:21px;top:1px" width="18" height="16" viewBox="0 0 18 16"><use href="#i-cart"/></svg><span class="cb" style="left:40px"><b class="i">i</b></span><svg class="ic" style="left:84px;top:0px" width="16" height="16" viewBox="0 0 16 16"><use href="#i-x"/></svg><span class="t" style="left:168px">28</span><span class="t" style="left:203px">38611108</span><span class="t" style="left:287px">1</span><span class="t" style="left:322px">38611108</span><span class="t d" style="left:406px">PLATE</span></div>
<div class="row" style="top:301px"><svg class="ic" style="left:5px;top:0.5px" width="16" height="16" viewBox="0 0 16 16"><use href="#i-gear"/></svg><svg class="ic" style="left:21px;top:1px" width="18" height="16" viewBox="0 0 18 16"><use href="#i-cart"/></svg><span class="cb" style="left:40px"><b class="i">i</b></span><span class="t" style="left:168px">29</span><span class="t" style="left:203px">36865104</span><span class="t" style="left:287px">1</span><span class="t" style="left:322px">36865104</span><span class="t d" style="left:406px">GASKET - WATER PUMP</span></div>
<div class="row" style="top:321px"><svg class="ic" style="left:5px;top:0.5px" width="16" height="16" viewBox="0 0 16 16"><use href="#i-gear"/></svg><svg class="ic" style="left:21px;top:1px" width="18" height="16" viewBox="0 0 18 16"><use href="#i-cart"/></svg><span class="cb" style="left:40px"><b class="i">i</b></span><span class="t" style="left:168px">30</span><span class="t" style="left:203px">0096436</span><span class="t" style="left:287px">1</span><span class="t" style="left:322px">0096436</span><span class="t d" style="left:406px">BOLT</span></div>
<div class="row" style="top:341px"><svg class="ic" style="left:5px;top:0.5px" width="16" height="16" viewBox="0 0 16 16"><use href="#i-gear"/></svg><svg class="ic" style="left:21px;top:1px" width="18" height="16" viewBox="0 0 18 16"><use href="#i-cart"/></svg><span class="cb" style="left:40px"><b class="i">i</b></span><span class="t" style="left:168px">31</span><span class="t" style="left:203px">0576051</span><span class="t" style="left:287px">1</span><span class="t" style="left:322px">0576051</span><span class="t d" style="left:406px">NUT</span></div>
<div class="row" style="top:361px"><svg class="ic" style="left:5px;top:0.5px" width="16" height="16" viewBox="0 0 16 16"><use href="#i-gear"/></svg><svg class="ic" style="left:21px;top:1px" width="18" height="16" viewBox="0 0 18 16"><use href="#i-cart"/></svg><span class="cb" style="left:40px"><b class="i">i</b></span><span class="t" style="left:168px">32</span><span class="t" style="left:203px">0920054</span><span class="t" style="left:287px">1</span><span class="t" style="left:322px">0920054</span><span class="t d" style="left:406px">WASHER</span></div>
<div class="row" style="top:381px"><svg class="ic" style="left:5px;top:0.5px" width="16" height="16" viewBox="0 0 16 16"><use href="#i-gear"/></svg><svg class="ic" style="left:21px;top:1px" width="18" height="16" viewBox="0 0 18 16"><use href="#i-cart"/></svg><span class="cb" style="left:40px"><b class="s">S</b></span><span class="cb" style="left:58px"><b class="i">i</b></span><svg class="ic" style="left:84px;top:0px" width="16" height="16" viewBox="0 0 16 16"><use href="#i-x"/></svg><svg class="ic" style="left:100px;top:0px" width="18" height="18" viewBox="0 0 18 18"><use href="#i-bub"/></svg><span class="t" style="left:168px">33</span><span class="t" style="left:203px">U7LW0046</span><span class="t" style="left:287px">1</span><span class="t" style="left:322px">U7LW0093</span><span class="t d" style="left:406px">KIT, REPAIR</span></div>
<div class="row" style="top:401px"><svg class="ic" style="left:5px;top:0.5px" width="16" height="16" viewBox="0 0 16 16"><use href="#i-gear"/></svg><svg class="ic" style="left:21px;top:1px" width="18" height="16" viewBox="0 0 18 16"><use href="#i-cart"/></svg><span class="cb" style="left:40px"><b class="s">S</b></span><span class="cb" style="left:58px"><b class="i">i</b></span><svg class="ic" style="left:84px;top:0px" width="16" height="16" viewBox="0 0 16 16"><use href="#i-x"/></svg><svg class="ic" style="left:100px;top:0px" width="18" height="18" viewBox="0 0 18 18"><use href="#i-bub"/></svg><span class="t" style="left:168px">33</span><span class="t" style="left:203px">U7LW0047</span><span class="t" style="left:287px">1</span><span class="t" style="left:322px">U7LW0102</span><span class="t d" style="left:406px">KIT, REPAIR</span></div>
<div class="row" style="top:421px"><svg class="ic" style="left:5px;top:0.5px" width="16" height="16" viewBox="0 0 16 16"><use href="#i-gear"/></svg><svg class="ic" style="left:21px;top:1px" width="18" height="16" viewBox="0 0 18 16"><use href="#i-cart"/></svg><span class="cb" style="left:40px"><b class="i">i</b></span><svg class="ic" style="left:84px;top:0px" width="16" height="16" viewBox="0 0 16 16"><use href="#i-x"/></svg><span class="t" style="left:168px">34</span><span class="t" style="left:203px">37766322</span><span class="t" style="left:287px">1</span><span class="t" style="left:322px">37766322</span><span class="t d" style="left:406px">HOUSING</span></div>
<div class="row" style="top:441px"><svg class="ic" style="left:5px;top:0.5px" width="16" height="16" viewBox="0 0 16 16"><use href="#i-gear"/></svg><svg class="ic" style="left:21px;top:1px" width="18" height="16" viewBox="0 0 18 16"><use href="#i-cart"/></svg><span class="cb" style="left:40px"><b class="s">S</b></span><span class="cb" style="left:58px"><b class="i">i</b></span><svg class="ic" style="left:84px;top:0px" width="16" height="16" viewBox="0 0 16 16"><use href="#i-x"/></svg><span class="t" style="left:168px">35</span><span class="t" style="left:203px">0490024</span><span class="t" style="left:287px">1</span><span class="t" style="left:322px">36841144</span><span class="t d" style="left:406px">JOINT</span></div>
<div class="row" style="top:461px"><svg class="ic" style="left:5px;top:0.5px" width="16" height="16" viewBox="0 0 16 16"><use href="#i-gear"/></svg><svg class="ic" style="left:21px;top:1px" width="18" height="16" viewBox="0 0 18 16"><use href="#i-cart"/></svg><span class="cb" style="left:40px"><b class="i">i</b></span><span class="t" style="left:168px">36</span><span class="t" style="left:203px">2431154</span><span class="t" style="left:287px">1</span><span class="t" style="left:322px">2431154</span><span class="t d" style="left:406px">PLUG</span></div>
<div class="row" style="top:481px"><svg class="ic" style="left:5px;top:0.5px" width="16" height="16" viewBox="0 0 16 16"><use href="#i-gear"/></svg><svg class="ic" style="left:21px;top:1px" width="18" height="16" viewBox="0 0 18 16"><use href="#i-cart"/></svg><span class="cb" style="left:40px"><b class="i">i</b></span><span class="t" style="left:168px">39</span><span class="t" style="left:203px">2485666</span><span class="t" style="left:287px">1</span><span class="t" style="left:322px">2485666</span><span class="t d" style="left:406px">THERMOSTAT</span></div>
<div class="row" style="top:501px"><svg class="ic" style="left:5px;top:0.5px" width="16" height="16" viewBox="0 0 16 16"><use href="#i-gear"/></svg><svg class="ic" style="left:21px;top:1px" width="18" height="16" viewBox="0 0 18 16"><use href="#i-cart"/></svg><span class="cb" style="left:40px"><b class="i">i</b></span><span class="t" style="left:168px">40</span><span class="t" style="left:203px">0746054</span><span class="t" style="left:287px">2</span><span class="t" style="left:322px">0746054</span><span class="t d" style="left:406px">SCREW</span></div>
<div class="row" style="top:521px"><svg class="ic" style="left:5px;top:0.5px" width="16" height="16" viewBox="0 0 16 16"><use href="#i-gear"/></svg><svg class="ic" style="left:21px;top:1px" width="18" height="16" viewBox="0 0 18 16"><use href="#i-cart"/></svg><span class="cb" style="left:40px"><b class="i">i</b></span><span class="t" style="left:168px">41</span><span class="t" style="left:203px">0920052</span><span class="t" style="left:287px">2</span><span class="t" style="left:322px">0920052</span><span class="t d" style="left:406px">WASHER</span></div>
<div class="row" style="top:541px"><svg class="ic" style="left:5px;top:0.5px" width="16" height="16" viewBox="0 0 16 16"><use href="#i-gear"/></svg><svg class="ic" style="left:21px;top:1px" width="18" height="16" viewBox="0 0 18 16"><use href="#i-cart"/></svg><span class="cb" style="left:40px"><b class="i">i</b></span><span class="t" style="left:168px">42</span><span class="t" style="left:203px">0746052</span><span class="t" style="left:287px">2</span><span class="t" style="left:322px">0746052</span><span class="t d" style="left:406px">BOLT</span></div>
<div class="row" style="top:561px"><svg class="ic" style="left:5px;top:0.5px" width="16" height="16" viewBox="0 0 16 16"><use href="#i-gear"/></svg><svg class="ic" style="left:21px;top:1px" width="18" height="16" viewBox="0 0 18 16"><use href="#i-cart"/></svg><span class="cb" style="left:40px"><b class="i">i</b></span><span class="t" style="left:168px">43</span><span class="t" style="left:203px">0920052</span><span class="t" style="left:287px">2</span><span class="t" style="left:322px">0920052</span><span class="t d" style="left:406px">WASHER</span></div>
<div class="row" style="top:581px"><svg class="ic" style="left:5px;top:0.5px" width="16" height="16" viewBox="0 0 16 16"><use href="#i-gear"/></svg><svg class="ic" style="left:21px;top:1px" width="18" height="16" viewBox="0 0 18 16"><use href="#i-cart"/></svg><span class="cb" style="left:40px"><b class="i">i</b></span><span class="t" style="left:168px">44</span><span class="t" style="left:203px">0746424</span><span class="t" style="left:287px">1</span><span class="t" style="left:322px">0746424</span><span class="t d" style="left:406px">SCREW</span></div>
<div class="row" style="top:601px"><svg class="ic" style="left:5px;top:0.5px" width="16" height="16" viewBox="0 0 16 16"><use href="#i-gear"/></svg><svg class="ic" style="left:21px;top:1px" width="18" height="16" viewBox="0 0 18 16"><use href="#i-cart"/></svg><span class="cb" style="left:40px"><b class="i">i</b></span><span class="t" style="left:168px">45</span><span class="t" style="left:203px">0920155</span><span class="t" style="left:287px">1</span><span class="t" style="left:322px">0920155</span><span class="t d" style="left:406px">WASHER</span></div>
<div class="row" style="top:621px"><svg class="ic" style="left:5px;top:0.5px" width="16" height="16" viewBox="0 0 16 16"><use href="#i-gear"/></svg><svg class="ic" style="left:21px;top:1px" width="18" height="16" viewBox="0 0 18 16"><use href="#i-cart"/></svg><span class="cb" style="left:40px"><b class="i">i</b></span><span class="t" style="left:168px">46</span><span class="t" style="left:203px">0746459</span><span class="t" style="left:287px">1</span><span class="t" style="left:322px">0746459</span><span class="t d" style="left:406px">SCREW</span></div>
<div class="row" style="top:641px"><svg class="ic" style="left:5px;top:0.5px" width="16" height="16" viewBox="0 0 16 16"><use href="#i-gear"/></svg><svg class="ic" style="left:21px;top:1px" width="18" height="16" viewBox="0 0 18 16"><use href="#i-cart"/></svg><span class="cb" style="left:40px"><b class="i">i</b></span><span class="t" style="left:168px">47</span><span class="t" style="left:203px">0920155</span><span class="t" style="left:287px">1</span><span class="t" style="left:322px">0920155</span><span class="t d" style="left:406px">WASHER</span></div>
<div class="row" style="top:661px"><svg class="ic" style="left:5px;top:0.5px" width="16" height="16" viewBox="0 0 16 16"><use href="#i-gear"/></svg><svg class="ic" style="left:21px;top:1px" width="18" height="16" viewBox="0 0 18 16"><use href="#i-cart"/></svg><span class="cb" style="left:40px"><b class="i">i</b></span><svg class="ic" style="left:84px;top:0px" width="16" height="16" viewBox="0 0 16 16"><use href="#i-x"/></svg><span class="t" style="left:168px">48</span><span class="t" style="left:203px">37733191</span><span class="t" style="left:287px">1</span><span class="t" style="left:322px">37733191</span><span class="t d" style="left:406px">CONNECTION</span></div>
<div class="row" style="top:681px"><svg class="ic" style="left:5px;top:0.5px" width="16" height="16" viewBox="0 0 16 16"><use href="#i-gear"/></svg><svg class="ic" style="left:21px;top:1px" width="18" height="16" viewBox="0 0 18 16"><use href="#i-cart"/></svg><span class="cb" style="left:40px"><b class="s">S</b></span><span class="cb" style="left:58px"><b class="i">i</b></span><svg class="ic" style="left:84px;top:0px" width="16" height="16" viewBox="0 0 16 16"><use href="#i-x"/></svg><span class="t" style="left:168px">49</span><span class="t" style="left:203px">36862119</span><span class="t" style="left:287px">1</span><span class="t" style="left:322px">36862212</span><span class="t d" style="left:406px">JOINT</span></div>
<div class="row" style="top:701px"><svg class="ic" style="left:5px;top:0.5px" width="16" height="16" viewBox="0 0 16 16"><use href="#i-gear"/></svg><svg class="ic" style="left:21px;top:1px" width="18" height="16" viewBox="0 0 18 16"><use href="#i-cart"/></svg><span class="cb" style="left:40px"><b class="i">i</b></span><svg class="ic" style="left:84px;top:0px" width="16" height="16" viewBox="0 0 16 16"><use href="#i-x"/></svg><span class="t" style="left:168px">50</span><span class="t" style="left:203px">2186209</span><span class="t" style="left:287px">2</span><span class="t" style="left:322px">2186209</span><span class="t d" style="left:406px">SCREW</span></div>
<div class="row" style="top:721px"><svg class="ic" style="left:5px;top:1px" width="16" height="16" viewBox="0 0 16 16"><use href="#i-gear2"/></svg><svg class="ic" style="left:21px;top:1px" width="18" height="16" viewBox="0 0 18 16"><use href="#i-cart"/></svg><span class="cb" style="left:40px"><b class="i">i</b></span><span class="t" style="left:168px">51</span><span class="t" style="left:203px">U5MH0065</span><span class="t" style="left:287px">1</span><span class="t" style="left:322px">U5MH0065</span><span class="t d" style="left:406px">HOSE KIT</span></div>
<div class="row" style="top:741px"><svg class="ic" style="left:5px;top:0.5px" width="16" height="16" viewBox="0 0 16 16"><use href="#i-gear"/></svg><svg class="ic" style="left:21px;top:1px" width="18" height="16" viewBox="0 0 18 16"><use href="#i-cart"/></svg><span class="cb" style="left:40px"><b class="i">i</b></span><span class="t" style="left:168px">55</span><span class="t" style="left:203px">3612M002</span><span class="t" style="left:287px">1</span><span class="t" style="left:322px">3612M002</span><span class="t d" style="left:406px">PLATE</span></div>
<div class="row" style="top:761px"><svg class="ic" style="left:5px;top:0.5px" width="16" height="16" viewBox="0 0 16 16"><use href="#i-gear"/></svg><svg class="ic" style="left:21px;top:1px" width="18" height="16" viewBox="0 0 18 16"><use href="#i-cart"/></svg><span class="cb" style="left:40px"><b class="s">S</b></span><span class="cb" style="left:58px"><b class="i">i</b></span><svg class="ic" style="left:84px;top:0px" width="16" height="16" viewBox="0 0 16 16"><use href="#i-x"/></svg><span class="t" style="left:168px">56</span><span class="t" style="left:203px">0490485</span><span class="t" style="left:287px">1</span><span class="t" style="left:322px">36851416</span><span class="t d" style="left:406px">JOINT</span></div>
<div class="row sel" style="top:781px"><svg class="ic" style="left:5px;top:0.5px" width="16" height="16" viewBox="0 0 16 16"><use href="#i-gear"/></svg><svg class="ic" style="left:21px;top:1px" width="18" height="16" viewBox="0 0 18 16"><use href="#i-cart"/></svg><span class="cb" style="left:40px"><b class="i">i</b></span><svg class="ic" style="left:84px;top:0px" width="16" height="16" viewBox="0 0 16 16"><use href="#i-x"/></svg><span class="t" style="left:168px">60</span><span class="t" style="left:203px">2233303</span><span class="t" style="left:287px">1</span><span class="t" style="left:322px">2233303</span><span class="t d" style="left:406px">SCREW</span></div>
<div class="row" style="top:801px"><svg class="ic" style="left:5px;top:0.5px" width="16" height="16" viewBox="0 0 16 16"><use href="#i-gear"/></svg><svg class="ic" style="left:21px;top:1px" width="18" height="16" viewBox="0 0 18 16"><use href="#i-cart"/></svg><span class="cb" style="left:40px"><b class="i">i</b></span><span class="t" style="left:168px">61</span><span class="t" style="left:203px">0920054</span><span class="t" style="left:287px">1</span><span class="t" style="left:322px">0920054</span><span class="t d" style="left:406px">WASHER</span></div>
<i class="vs" style="left:435px"></i><i class="vs" style="left:519px"></i><i class="vs" style="left:554px"></i><i class="vs" style="left:638px"></i><i class="vs" style="left:673px"></i><i class="vs" style="left:757px"></i><i class="vs" style="left:887px"></i><i class="vs" style="left:957px"></i><i class="vs" style="left:1027px"></i><i class="vw" style="left:435px;top:781px"></i><i class="vw" style="left:519px;top:781px"></i><i class="vw" style="left:554px;top:781px"></i><i class="vw" style="left:638px;top:781px"></i><i class="vw" style="left:673px;top:781px"></i><i class="vw" style="left:757px;top:781px"></i><i class="vw" style="left:887px;top:781px"></i><i class="vw" style="left:957px;top:781px"></i><i class="vw" style="left:1027px;top:781px"></i>
<div id="wm">英金狮</div>
</div>
</body></html>
